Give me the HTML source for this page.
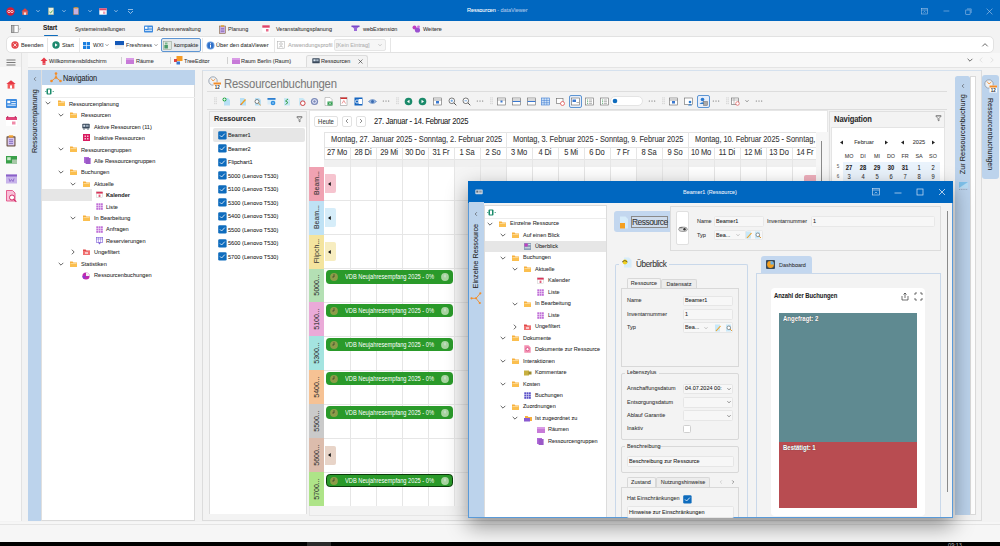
<!DOCTYPE html><html><head><meta charset="utf-8"><style>
html,body{margin:0;padding:0;}
body{width:1000px;height:546px;overflow:hidden;position:relative;background:#f3f3f3;font-family:"Liberation Sans",sans-serif;}
div{position:absolute;box-sizing:border-box;}
.t{white-space:nowrap;-webkit-text-stroke:0.06px currentColor;}
</style></head><body>
<div style="left:0px;top:0px;width:1000px;height:21px;background:#0067c0;"></div>
<svg style="position:absolute;left:6px;top:7px;" width="9" height="9" viewBox="0 0 9 9"><circle cx="4.5" cy="4.5" r="4.2" fill="#d0203a"/><ellipse cx="3" cy="4.5" rx="1.3" ry="1.1" fill="none" stroke="#fff" stroke-width="0.7"/><ellipse cx="6" cy="4.5" rx="1.3" ry="1.1" fill="none" stroke="#fff" stroke-width="0.7"/></svg>
<svg style="position:absolute;left:21px;top:7.5px;" width="8" height="7" viewBox="0 0 8 7"><path d="M0.3 3.5 L4 0.3 L7.7 3.5Z" fill="#e8413a"/><rect x="1.3" y="3.3" width="5.4" height="3.5" fill="#f06a5a"/><rect x="3.2" y="4.5" width="1.6" height="2.3" fill="#fff"/></svg>
<svg style="position:absolute;left:33.5px;top:7px;" width="8" height="8" viewBox="0 0 8 8"><path d="M2.4 3.2 L4 4.8 L5.6 3.2" fill="none" stroke="#cfe0f4" stroke-width="0.7"/></svg>
<svg style="position:absolute;left:59.5px;top:7px;" width="8" height="8" viewBox="0 0 8 8"><path d="M2.4 3.2 L4 4.8 L5.6 3.2" fill="none" stroke="#cfe0f4" stroke-width="0.7"/></svg>
<svg style="position:absolute;left:85.5px;top:7px;" width="8" height="8" viewBox="0 0 8 8"><path d="M2.4 3.2 L4 4.8 L5.6 3.2" fill="none" stroke="#cfe0f4" stroke-width="0.7"/></svg>
<svg style="position:absolute;left:111.5px;top:7px;" width="8" height="8" viewBox="0 0 8 8"><path d="M2.4 3.2 L4 4.8 L5.6 3.2" fill="none" stroke="#cfe0f4" stroke-width="0.7"/></svg>
<svg style="position:absolute;left:48px;top:7px;" width="6" height="8" viewBox="0 0 6 8"><rect x="0.3" y="0.8" width="5.4" height="7" fill="#e9f0e0" stroke="#8a9a7a" stroke-width="0.4"/><path d="M1.5 5 L2.6 6 L4.6 3.5" stroke="#2a9a3a" stroke-width="0.8" fill="none"/></svg>
<svg style="position:absolute;left:73px;top:7px;" width="6" height="8" viewBox="0 0 6 8"><rect x="0.3" y="0.8" width="5.4" height="7" fill="#c8b0e0" stroke="#8a6a30" stroke-width="0.4"/><rect x="1.3" y="0.3" width="3.4" height="1.3" fill="#e0a030"/></svg>
<svg style="position:absolute;left:99px;top:7.5px;" width="8" height="7" viewBox="0 0 8 7"><rect x="0.3" y="0.3" width="7.4" height="6.4" fill="#fff"/><rect x="0.3" y="0.3" width="7.4" height="2" fill="#e04468"/><rect x="4" y="3.5" width="2.4" height="2.4" fill="#f0a0b8"/></svg>
<svg style="position:absolute;left:127px;top:7.5px;" width="7" height="7" viewBox="0 0 7 7"><path d="M1 1.5 H6 M1 3 L3.5 5.5 L6 3" stroke="#cfe0f4" stroke-width="0.7" fill="none"/></svg>
<div class="t" style="left:467px;top:7.2px;font-size:5.6px;line-height:7px;color:#fff;letter-spacing:-0.1px">Ressourcen <span style="color:#a9c6ea">- dataViewer</span></div>
<svg style="position:absolute;left:920.5px;top:7.5px;" width="8" height="7" viewBox="0 0 8 7"><rect x="0.5" y="0.5" width="6" height="5.5" fill="none" stroke="#b9d1ee" stroke-width="0.5"/><path d="M0.5 2 H6.5" stroke="#b9d1ee" stroke-width="0.5"/><path d="M2.4 4.6 L3.5 3.4 L4.6 4.6" stroke="#b9d1ee" stroke-width="0.5" fill="none"/></svg>
<svg style="position:absolute;left:942.5px;top:10px;" width="7" height="2" viewBox="0 0 7 2"><path d="M0.5 1 H6.3" stroke="#b9d1ee" stroke-width="0.5"/></svg>
<svg style="position:absolute;left:964.5px;top:7.5px;" width="7" height="7" viewBox="0 0 7 7"><rect x="0.8" y="2" width="4.3" height="4.3" fill="none" stroke="#b9d1ee" stroke-width="0.5"/><path d="M2 0.9 H6.2 V5" stroke="#b9d1ee" stroke-width="0.5" fill="none"/></svg>
<svg style="position:absolute;left:986px;top:8px;" width="7" height="7" viewBox="0 0 7 7"><path d="M0.6 0.6 L6.4 6.4 M6.4 0.6 L0.6 6.4" stroke="#b9d1ee" stroke-width="0.55"/></svg>
<div style="left:0px;top:21px;width:1000px;height:16px;background:#f3f3f3;"></div>
<svg style="position:absolute;left:11px;top:25px;" width="10" height="8" viewBox="0 0 10 8"><rect x="0.4" y="0.4" width="6.8" height="7" fill="#fff" stroke="#777" stroke-width="0.6"/><rect x="0.4" y="0.4" width="2.6" height="7" fill="#bbb" stroke="#777" stroke-width="0.6"/><path d="M7.8 3.5 L8.7 4.4 L9.6 3.5" stroke="#777" stroke-width="0.5" fill="none"/></svg>
<div class="t" style="left:43px;top:24.47px;font-size:7.15px;line-height:8.22px;color:#222;transform:scaleX(0.91);transform-origin:left;font-weight:700;letter-spacing:-0.15px">Start</div>
<div style="left:43.5px;top:35px;width:14.5px;height:1.3px;background:#0f6cbd;border-radius:1px;"></div>
<div class="t" style="left:74.5px;top:25.71px;font-size:6.05px;line-height:6.96px;color:#333;transform:scaleX(0.91);transform-origin:left;letter-spacing:-0.05px">Systemeinstellungen</div>
<svg style="position:absolute;left:144px;top:25px;" width="9" height="8" viewBox="0 0 9 8"><rect x="0" y="0.5" width="9" height="7" rx="0.8" fill="#3d8be0"/><rect x="1" y="1.8" width="2.5" height="2" fill="#fff"/><rect x="4.5" y="2" width="3.5" height="0.7" fill="#fff"/><rect x="4.5" y="3.6" width="3.5" height="0.7" fill="#fff"/><rect x="1" y="5" width="7" height="0.7" fill="#fff"/></svg>
<div class="t" style="left:157px;top:25.71px;font-size:6.05px;line-height:6.96px;color:#333;transform:scaleX(0.91);transform-origin:left;">Adressverwaltung</div>
<svg style="position:absolute;left:219px;top:24.5px;" width="7" height="9" viewBox="0 0 7 9"><rect x="0.4" y="1" width="6.2" height="7.6" fill="#c9b0e6" stroke="#7a5a20" stroke-width="0.5"/><rect x="2" y="0.3" width="3" height="1.5" fill="#e0a030"/><path d="M1.8 3.5H5.2M1.8 5H5.2M1.8 6.5H5.2" stroke="#6a4aa0" stroke-width="0.5"/></svg>
<div class="t" style="left:228px;top:25.71px;font-size:6.05px;line-height:6.96px;color:#333;transform:scaleX(0.91);transform-origin:left;">Planung</div>
<svg style="position:absolute;left:262px;top:25px;" width="8" height="8" viewBox="0 0 8 8"><rect x="0.3" y="0.3" width="7.4" height="7.4" fill="#fff"/><rect x="0.3" y="0.3" width="7.4" height="2.4" fill="#e04468"/><rect x="4" y="4" width="2.5" height="2.5" fill="#e86a8a"/></svg>
<div class="t" style="left:276px;top:25.71px;font-size:6.05px;line-height:6.96px;color:#333;transform:scaleX(0.91);transform-origin:left;">Veranstaltungsplanung</div>
<svg style="position:absolute;left:351px;top:25px;" width="9" height="8" viewBox="0 0 9 8"><path d="M0.5 1 H8.5 L6 3.5 V6 H3 V3.5Z" fill="#9a6ad8"/><rect x="0.5" y="0.5" width="8" height="1.6" fill="#7a4ac8"/></svg>
<div class="t" style="left:362.5px;top:25.71px;font-size:6.05px;line-height:6.96px;color:#333;transform:scaleX(0.91);transform-origin:left;">webExtension</div>
<svg style="position:absolute;left:412px;top:25px;" width="9" height="8" viewBox="0 0 9 8"><circle cx="2.5" cy="2.5" r="2" fill="#c040c0"/><circle cx="5.5" cy="5" r="2.6" fill="#9a50d0"/><circle cx="6.5" cy="1.8" r="1.4" fill="#d070e0"/></svg>
<div class="t" style="left:423px;top:25.71px;font-size:6.05px;line-height:6.96px;color:#333;transform:scaleX(0.91);transform-origin:left;">Weitere</div>
<div style="left:6px;top:36.4px;width:988px;height:16.3px;background:#fff;border:1px solid #e2e2e2;border-radius:5px;"></div>
<svg style="position:absolute;left:10.5px;top:41px;" width="8" height="8" viewBox="0 0 8 8"><circle cx="4" cy="4" r="3.7" fill="#e5484d"/><path d="M2.4 2.4 L5.6 5.6 M5.6 2.4 L2.4 5.6" stroke="#fff" stroke-width="0.8"/></svg>
<div class="t" style="left:21px;top:41.44px;font-size:6.16px;line-height:7.08px;color:#333;transform:scaleX(0.91);transform-origin:left;">Beenden</div>
<div style="left:47px;top:38px;width:1px;height:14px;background:#e6e6e6;"></div>
<svg style="position:absolute;left:51.5px;top:41px;" width="8" height="8" viewBox="0 0 8 8"><circle cx="4" cy="4" r="3.7" fill="#1f8a70"/><path d="M3 2.3 L5.6 4 L3 5.7Z" fill="#fff"/></svg>
<div class="t" style="left:62px;top:41.44px;font-size:6.16px;line-height:7.08px;color:#333;transform:scaleX(0.91);transform-origin:left;">Start</div>
<div style="left:79px;top:38px;width:1px;height:14px;background:#e6e6e6;"></div>
<svg style="position:absolute;left:83px;top:41.5px;" width="7" height="7" viewBox="0 0 7 7"><rect x="0" y="0" width="3.2" height="3.2" fill="#1a7fe0"/><rect x="3.8" y="0" width="3.2" height="3.2" fill="#1a7fe0"/><rect x="0" y="3.8" width="3.2" height="3.2" fill="#1a7fe0"/><rect x="3.8" y="3.8" width="3.2" height="3.2" fill="#1a7fe0"/></svg>
<div class="t" style="left:93px;top:41.44px;font-size:6.16px;line-height:7.08px;color:#333;transform:scaleX(0.91);transform-origin:left;">WXI</div>
<svg style="position:absolute;left:103px;top:41.3px;" width="8" height="8" viewBox="0 0 8 8"><path d="M2.5 3.25 L4 4.75 L5.5 3.25" fill="none" stroke="#555" stroke-width="0.6"/></svg>
<svg style="position:absolute;left:115px;top:40.5px;" width="9" height="8" viewBox="0 0 9 8"><rect x="0" y="0" width="9" height="4" fill="#1559b8"/><rect x="0" y="4" width="9" height="1" fill="#dfe6f0"/><rect x="0" y="5" width="9" height="3" fill="#f0f0f0"/></svg>
<div class="t" style="left:126px;top:41.44px;font-size:6.16px;line-height:7.08px;color:#333;transform:scaleX(0.91);transform-origin:left;">Freshness</div>
<svg style="position:absolute;left:151.5px;top:41.3px;" width="8" height="8" viewBox="0 0 8 8"><path d="M2.5 3.25 L4 4.75 L5.5 3.25" fill="none" stroke="#555" stroke-width="0.6"/></svg>
<div style="left:161px;top:38px;width:39.5px;height:13.5px;background:#e6eaef;border:0.8px solid #5d95d3;border-radius:2px;"></div>
<svg style="position:absolute;left:163px;top:40.5px;" width="9" height="9" viewBox="0 0 9 9"><rect x="0.4" y="0.4" width="8" height="8" fill="#dfe8e0" stroke="#8a9a8a" stroke-width="0.5"/><rect x="1.4" y="4" width="3.5" height="3.5" fill="#4a9a6a"/><rect x="2" y="1.5" width="2.5" height="2" fill="#7ab890"/></svg>
<div class="t" style="left:174px;top:41.44px;font-size:6.16px;line-height:7.08px;color:#333;transform:scaleX(0.91);transform-origin:left;">kompakte</div>
<div style="left:202px;top:38px;width:1px;height:14px;background:#e6e6e6;"></div>
<svg style="position:absolute;left:206px;top:40.5px;" width="9" height="9" viewBox="0 0 9 9"><circle cx="4.5" cy="4.5" r="4" fill="#6a9ee0"/><circle cx="4.5" cy="4.5" r="3" fill="#2f6fc8"/><rect x="4" y="3.8" width="1" height="2.8" fill="#fff"/><rect x="4" y="2.3" width="1" height="0.9" fill="#fff"/></svg>
<div class="t" style="left:216px;top:41.44px;font-size:6.16px;line-height:7.08px;color:#333;transform:scaleX(0.91);transform-origin:left;">Über den dataViewer</div>
<div style="left:273.5px;top:38px;width:1px;height:14px;background:#e6e6e6;"></div>
<svg style="position:absolute;left:277px;top:41px;" width="8" height="8" viewBox="0 0 8 8"><rect x="0.4" y="0.4" width="7" height="7" fill="#fff" stroke="#aaa" stroke-width="0.5"/><circle cx="4" cy="3" r="1.3" fill="none" stroke="#999" stroke-width="0.5"/><path d="M1.8 6.3 Q4 4 6.2 6.3" fill="none" stroke="#999" stroke-width="0.5"/></svg>
<div class="t" style="left:287.5px;top:41.44px;font-size:6.16px;line-height:7.08px;color:#aaa;transform:scaleX(0.91);transform-origin:left;">Anwendungsprofil</div>
<div style="left:334px;top:38.5px;width:52px;height:12.5px;background:#f6f6f6;border:0.6px solid #e6e6e6;border-radius:2px;"></div>
<div class="t" style="left:336px;top:41.44px;font-size:6.16px;line-height:7.08px;color:#b0b0b0;transform:scaleX(0.91);transform-origin:left;">[Kein Eintrag]</div>
<svg style="position:absolute;left:375.5px;top:41.3px;" width="8" height="8" viewBox="0 0 8 8"><path d="M2.4 3.2 L4 4.8 L5.6 3.2" fill="none" stroke="#aaa" stroke-width="0.6"/></svg>
<div style="left:389.5px;top:38px;width:1px;height:14px;background:#e6e6e6;"></div>
<svg style="position:absolute;left:981.3px;top:40.5px;" width="8" height="8" viewBox="0 0 8 8"><path d="M1.2999999999999998 5.35 L4 2.65 L6.7 5.35" fill="none" stroke="#444" stroke-width="0.8"/></svg>
<div style="left:0px;top:53px;width:1000px;height:14px;background:#f3f3f3;"></div>
<div style="left:0px;top:67px;width:21px;height:454px;background:#f9f9f9;"></div>
<div style="left:28px;top:53px;width:972px;height:14px;background:#f8f8f8;"></div>
<div style="left:28px;top:66.5px;width:972px;height:0.8px;background:#e4e4e4;"></div>
<svg style="position:absolute;left:5.5px;top:59px;" width="10" height="7" viewBox="0 0 10 7"><path d="M0.5 1 H9.5 M0.5 3.5 H9.5 M0.5 6 H9.5" stroke="#444" stroke-width="0.7"/></svg>
<svg style="position:absolute;left:39.5px;top:57px;" width="8" height="8" viewBox="0 0 8 8"><path d="M4 0.5 L7.5 4 H5.5 V6.5 H2.5 V4 H0.5Z" fill="#e63946"/><rect x="2.5" y="6.6" width="3" height="1.2" fill="#e63946"/></svg>
<div class="t" style="left:49px;top:57.61px;font-size:6.05px;line-height:6.96px;color:#333;transform:scaleX(0.91);transform-origin:left;">Willkommensbildschirm</div>
<div style="left:121px;top:57px;width:0.8px;height:7px;background:#d0d0d0;"></div>
<svg style="position:absolute;left:126px;top:57.5px;" width="8" height="6" viewBox="0 0 8 6"><rect x="0" y="0" width="8" height="6" fill="#c77ad8"/><rect x="0" y="0" width="8" height="2" fill="#d99be6"/></svg>
<div class="t" style="left:135.5px;top:57.61px;font-size:6.05px;line-height:6.96px;color:#333;transform:scaleX(0.91);transform-origin:left;">Räume</div>
<div style="left:170px;top:57px;width:0.8px;height:7px;background:#d0d0d0;"></div>
<svg style="position:absolute;left:174px;top:55.5px;" width="9" height="9" viewBox="0 0 9 9"><rect x="2.5" y="0" width="6" height="5" fill="#f59a23"/><rect x="0" y="3" width="3" height="3" fill="#e04040"/><rect x="2.5" y="5.5" width="3.5" height="3" fill="#3a78d0"/></svg>
<div class="t" style="left:184px;top:57.61px;font-size:6.05px;line-height:6.96px;color:#333;transform:scaleX(0.91);transform-origin:left;">TreeEditor</div>
<div style="left:227px;top:57px;width:0.8px;height:7px;background:#d0d0d0;"></div>
<svg style="position:absolute;left:231.5px;top:57.5px;" width="8" height="6" viewBox="0 0 8 6"><rect x="0" y="0" width="8" height="6" fill="#c77ad8"/><rect x="0" y="0" width="8" height="2" fill="#d99be6"/></svg>
<div class="t" style="left:240.7px;top:57.61px;font-size:6.05px;line-height:6.96px;color:#333;transform:scaleX(0.91);transform-origin:left;">Raum Berlin (Raum)</div>
<div style="left:306px;top:55px;width:62px;height:12.3px;background:#f3f3f3;border:0.7px solid #dcdcdc;border-bottom:none;border-radius:2.5px 2.5px 0 0;"></div>
<svg style="position:absolute;left:311.5px;top:57.5px;" width="8" height="6" viewBox="0 0 8 6"><rect x="0.3" y="0.3" width="7.4" height="5" rx="0.6" fill="#3b4a5c"/><rect x="1.4" y="1.3" width="2.2" height="2" fill="#d8e4f0"/><rect x="4.2" y="1.3" width="2.4" height="2" fill="#a8b8c8"/></svg>
<div class="t" style="left:321px;top:57.61px;font-size:6.05px;line-height:6.96px;color:#333;transform:scaleX(0.91);transform-origin:left;">Ressourcen</div>
<svg style="position:absolute;left:357px;top:57.5px;" width="7" height="7" viewBox="0 0 7 7"><path d="M1.5 1.5 L5.5 5.5 M5.5 1.5 L1.5 5.5" stroke="#333" stroke-width="0.6"/></svg>
<svg style="position:absolute;left:965.5px;top:55.8px;" width="8" height="8" viewBox="0 0 8 8"><path d="M1.6 2.8 L4 5.2 L6.4 2.8" fill="none" stroke="#444" stroke-width="0.8"/></svg>
<svg style="position:absolute;left:977px;top:55.8px;" width="8" height="8" viewBox="0 0 8 8"><path d="M5.2 1.6 L2.8 4 L5.2 6.4" fill="none" stroke="#d0d0d0" stroke-width="0.6"/></svg>
<svg style="position:absolute;left:988px;top:55.8px;" width="8" height="8" viewBox="0 0 8 8"><path d="M2.8 1.6 L5.2 4 L2.8 6.4" fill="none" stroke="#d0d0d0" stroke-width="0.6"/></svg>
<div style="left:21px;top:53px;width:0.8px;height:468px;background:#e2e2e2;"></div>
<svg style="position:absolute;left:6px;top:79.5px;" width="10" height="9" viewBox="0 0 10 9"><path d="M5 0.3 L9.7 4 H0.3Z" fill="#e63946"/><rect x="1.6" y="4" width="6.8" height="4.6" fill="#f25c5c"/><rect x="4" y="5.4" width="2" height="3.2" fill="#fff"/></svg>
<svg style="position:absolute;left:5.5px;top:98.5px;" width="11" height="9" viewBox="0 0 11 9"><rect x="0" y="0" width="11" height="9" rx="1" fill="#3d8be0"/><rect x="1.3" y="1.8" width="3" height="2.4" fill="#fff"/><rect x="5.3" y="2" width="4.5" height="0.8" fill="#fff"/><rect x="5.3" y="4" width="4.5" height="0.8" fill="#fff"/><rect x="1.3" y="5.7" width="8.5" height="0.9" fill="#fff"/></svg>
<svg style="position:absolute;left:5.5px;top:116px;" width="11" height="10" viewBox="0 0 11 10"><rect x="0" y="1" width="11" height="9" fill="#fff"/><rect x="0" y="1" width="11" height="3" fill="#e0457a"/><rect x="1.2" y="0" width="1" height="2" fill="#b03060"/><rect x="8.8" y="0" width="1" height="2" fill="#b03060"/><rect x="6" y="5.5" width="3.5" height="3" fill="#f08aa8"/></svg>
<svg style="position:absolute;left:6px;top:135px;" width="10" height="12" viewBox="0 0 10 12"><rect x="0.5" y="1.3" width="9" height="10.2" rx="0.8" fill="#6b5040"/><rect x="1.6" y="2.6" width="6.8" height="7.8" fill="#d8c8f0"/><rect x="2.8" y="0.3" width="4.4" height="2.2" fill="#f0a030"/><path d="M3 4.8H7M3 6.6H7M3 8.4H7" stroke="#6a50b0" stroke-width="0.7"/></svg>
<svg style="position:absolute;left:5.5px;top:155.5px;" width="11" height="8" viewBox="0 0 11 8"><rect x="0" y="0" width="11" height="7.5" fill="#3aa04a"/><rect x="1.2" y="1.2" width="3.5" height="3" fill="#c8e8c8"/><rect x="6" y="3.5" width="5" height="4" fill="#a8c8a8"/></svg>
<svg style="position:absolute;left:5.5px;top:174px;" width="11" height="10" viewBox="0 0 11 10"><rect x="0" y="0.5" width="11" height="9" fill="#c8b4ea"/><rect x="0" y="0.5" width="11" height="2" fill="#8a60c8"/><path d="M3 4.5 L4 7.5 L5.5 5.5 L7 7.5 L8 4.5" stroke="#7a50c0" stroke-width="0.7" fill="none"/></svg>
<svg style="position:absolute;left:5.5px;top:190px;" width="11" height="13" viewBox="0 0 11 13"><path d="M0.5 0.5 H6.5 L9 3 V11 H0.5Z" fill="#f8c0d8" stroke="#e0407a" stroke-width="0.8"/><circle cx="6" cy="7.5" r="2.5" fill="#fff" stroke="#d02060" stroke-width="0.9"/><path d="M7.8 9.3 L10.3 11.8" stroke="#d02060" stroke-width="1.1"/></svg>
<div style="left:28px;top:70px;width:12.8px;height:451px;background:#bcd3ec;"></div>
<div style="left:40.8px;top:70px;width:2px;height:451px;background:linear-gradient(90deg,#d8d8d8,#f4f4f4);"></div>
<svg style="position:absolute;left:31px;top:75px;" width="8" height="8" viewBox="0 0 8 8"><path d="M4.9 2.2 L3.1 4 L4.9 5.8" fill="none" stroke="#555" stroke-width="0.6"/></svg>
<div class="t" style="left:-114.8px;top:116.56px;width:300px;text-align:center;font-size:7.2px;line-height:8.28px;color:#222;transform:rotate(-90deg);">Ressourcenplanung</div>
<div style="left:42px;top:70px;width:153px;height:451px;background:#fff;border-right:0.8px solid #dadada;border-bottom:0.8px solid #dadada;"></div>
<div style="left:42px;top:70px;width:153px;height:15px;background:#bcd3ec;"></div>
<svg style="position:absolute;left:50px;top:72px;" width="12" height="11" viewBox="0 0 12 11"><path d="M6 1.5 V5.5 L1.5 9 M6 5.5 L10.5 9" stroke="#f28c28" stroke-width="0.9" fill="none"/><circle cx="6" cy="1.5" r="1.3" fill="#f28c28"/><circle cx="6" cy="5.5" r="1.3" fill="#f28c28"/><circle cx="1.5" cy="9" r="1.3" fill="#f28c28"/><circle cx="10.5" cy="9" r="1.3" fill="#f28c28"/></svg>
<div class="t" style="left:63.3px;top:73.50px;font-size:8.14px;line-height:9.36px;color:#222;transform:scaleX(0.91);transform-origin:left;letter-spacing:-0.1px">Navigation</div>
<svg style="position:absolute;left:45px;top:88px;" width="9" height="7" viewBox="0 0 9 7"><rect x="1.5" y="0.5" width="5" height="6" rx="1" fill="#1a8a6a"/><rect x="3" y="1.5" width="2" height="4" fill="#fff"/><circle cx="0.8" cy="3.5" r="0.6" fill="#1a8a6a"/><circle cx="8.2" cy="3.5" r="0.6" fill="#1a8a6a"/></svg>
<div style="left:42px;top:96.5px;width:153px;height:0.7px;background:#ececec;"></div>
<div style="left:42px;top:189px;width:50px;height:11.6px;background:#e6e6e6;"></div>
<svg style="position:absolute;left:44.2px;top:99.2px;" width="8" height="8" viewBox="0 0 8 8"><path d="M1.7000000000000002 2.85 L4 5.15 L6.3 2.85" fill="none" stroke="#333" stroke-width="0.75"/></svg>
<svg style="position:absolute;left:57.8px;top:100.2px;" width="7" height="6" viewBox="0 0 7 6"><path d="M0 0.5 h2.6 l0.8 0.9 H7 V6 H0Z" fill="#f7b03c"/><rect x="0" y="2" width="7" height="4" fill="#fbbf4f"/><rect x="0.6" y="2.4" width="5.8" height="0.6" fill="#fff3d6" opacity="0.8"/></svg>
<div class="t" style="left:68.8px;top:99.64px;font-size:6.16px;line-height:7.08px;color:#2a2a2a;transform:scaleX(0.91);transform-origin:left;">Ressourcenplanung</div>
<svg style="position:absolute;left:57px;top:110.7px;" width="8" height="8" viewBox="0 0 8 8"><path d="M1.7000000000000002 2.85 L4 5.15 L6.3 2.85" fill="none" stroke="#333" stroke-width="0.75"/></svg>
<svg style="position:absolute;left:70px;top:111.7px;" width="7" height="6" viewBox="0 0 7 6"><path d="M0 0.5 h2.6 l0.8 0.9 H7 V6 H0Z" fill="#f7b03c"/><rect x="0" y="2" width="7" height="4" fill="#fbbf4f"/><rect x="0.6" y="2.4" width="5.8" height="0.6" fill="#fff3d6" opacity="0.8"/></svg>
<div class="t" style="left:81px;top:111.14px;font-size:6.16px;line-height:7.08px;color:#2a2a2a;transform:scaleX(0.91);transform-origin:left;">Ressourcen</div>
<svg style="position:absolute;left:82px;top:122.8px;" width="8" height="7" viewBox="0 0 8 7"><rect x="0.3" y="0.8" width="7.4" height="4.8" rx="0.8" fill="#3b4a5c"/><rect x="1.3" y="1.8" width="2" height="2" fill="#d0dce8"/><rect x="4" y="1.8" width="2.6" height="2" fill="#98a8b8"/><rect x="1.5" y="5.6" width="1" height="1.2" fill="#3b4a5c"/><rect x="5.5" y="5.6" width="1" height="1.2" fill="#3b4a5c"/></svg>
<div class="t" style="left:94px;top:122.74px;font-size:6.16px;line-height:7.08px;color:#2a2a2a;transform:scaleX(0.91);transform-origin:left;">Aktive Ressourcen (11)</div>
<svg style="position:absolute;left:83px;top:134.1px;" width="7" height="7" viewBox="0 0 7 7"><rect x="0" y="0" width="7" height="7" fill="#d81b60"/><rect x="1.5" y="1.5" width="1.5" height="1.5" fill="#f8bbd0"/><rect x="4" y="1.5" width="1.5" height="1.5" fill="#f8bbd0"/><rect x="1.5" y="4" width="1.5" height="1.5" fill="#f8bbd0"/><rect x="4" y="4" width="1.5" height="1.5" fill="#f8bbd0"/></svg>
<div class="t" style="left:94px;top:134.04px;font-size:6.16px;line-height:7.08px;color:#2a2a2a;transform:scaleX(0.91);transform-origin:left;">Inaktive Ressourcen</div>
<svg style="position:absolute;left:57px;top:145.3px;" width="8" height="8" viewBox="0 0 8 8"><path d="M1.7000000000000002 2.85 L4 5.15 L6.3 2.85" fill="none" stroke="#333" stroke-width="0.75"/></svg>
<svg style="position:absolute;left:70px;top:146.3px;" width="7" height="6" viewBox="0 0 7 6"><path d="M0 0.5 h2.6 l0.8 0.9 H7 V6 H0Z" fill="#f7b03c"/><rect x="0" y="2" width="7" height="4" fill="#fbbf4f"/><rect x="0.6" y="2.4" width="5.8" height="0.6" fill="#fff3d6" opacity="0.8"/></svg>
<div class="t" style="left:81px;top:145.74px;font-size:6.16px;line-height:7.08px;color:#2a2a2a;transform:scaleX(0.91);transform-origin:left;">Ressourcengruppen</div>
<svg style="position:absolute;left:83.5px;top:157.1px;" width="7" height="7" viewBox="0 0 7 7"><rect x="0" y="0" width="5" height="6" fill="#b06ad8"/><rect x="1.6" y="1" width="5" height="6" fill="#9b59c8"/></svg>
<div class="t" style="left:94px;top:157.04px;font-size:6.16px;line-height:7.08px;color:#2a2a2a;transform:scaleX(0.91);transform-origin:left;">Alle Ressourcengruppen</div>
<svg style="position:absolute;left:57px;top:168px;" width="8" height="8" viewBox="0 0 8 8"><path d="M1.7000000000000002 2.85 L4 5.15 L6.3 2.85" fill="none" stroke="#333" stroke-width="0.75"/></svg>
<svg style="position:absolute;left:70px;top:169.0px;" width="7" height="6" viewBox="0 0 7 6"><path d="M0 0.5 h2.6 l0.8 0.9 H7 V6 H0Z" fill="#f7b03c"/><rect x="0" y="2" width="7" height="4" fill="#fbbf4f"/><rect x="0.6" y="2.4" width="5.8" height="0.6" fill="#fff3d6" opacity="0.8"/></svg>
<div class="t" style="left:81px;top:168.44px;font-size:6.16px;line-height:7.08px;color:#2a2a2a;transform:scaleX(0.91);transform-origin:left;">Buchungen</div>
<svg style="position:absolute;left:69px;top:179.5px;" width="8" height="8" viewBox="0 0 8 8"><path d="M1.7000000000000002 2.85 L4 5.15 L6.3 2.85" fill="none" stroke="#333" stroke-width="0.75"/></svg>
<svg style="position:absolute;left:82.5px;top:180.5px;" width="7" height="6" viewBox="0 0 7 6"><path d="M0 0.5 h2.6 l0.8 0.9 H7 V6 H0Z" fill="#f7b03c"/><rect x="0" y="2" width="7" height="4" fill="#fbbf4f"/><rect x="0.6" y="2.4" width="5.8" height="0.6" fill="#fff3d6" opacity="0.8"/></svg>
<div class="t" style="left:94px;top:179.94px;font-size:6.16px;line-height:7.08px;color:#2a2a2a;transform:scaleX(0.91);transform-origin:left;">Aktuelle</div>
<svg style="position:absolute;left:95.5px;top:191.3px;" width="7" height="7" viewBox="0 0 7 7"><rect x="0.3" y="0.8" width="6.4" height="5.9" fill="#fff" stroke="#bbb" stroke-width="0.4"/><rect x="0.3" y="0.8" width="6.4" height="1.8" fill="#d9355a"/><rect x="2.6" y="3.6" width="1.8" height="2.4" fill="#d9355a" opacity="0.8"/></svg>
<div class="t" style="left:106px;top:191.24px;font-size:6.16px;line-height:7.08px;color:#2a2a2a;transform:scaleX(0.91);transform-origin:left;"><b>Kalender</b></div>
<svg style="position:absolute;left:95.5px;top:202.9px;" width="7" height="7" viewBox="0 0 7 7"><rect x="0.3" y="0.3" width="1.9" height="1.9" fill="#c070d8"/><rect x="0.3" y="2.5999999999999996" width="1.9" height="1.9" fill="#c070d8"/><rect x="0.3" y="4.8999999999999995" width="1.9" height="1.9" fill="#c070d8"/><rect x="2.5999999999999996" y="0.3" width="1.9" height="1.9" fill="#c070d8"/><rect x="2.5999999999999996" y="2.5999999999999996" width="1.9" height="1.9" fill="#c070d8"/><rect x="2.5999999999999996" y="4.8999999999999995" width="1.9" height="1.9" fill="#c070d8"/><rect x="4.8999999999999995" y="0.3" width="1.9" height="1.9" fill="#c070d8"/><rect x="4.8999999999999995" y="2.5999999999999996" width="1.9" height="1.9" fill="#c070d8"/><rect x="4.8999999999999995" y="4.8999999999999995" width="1.9" height="1.9" fill="#c070d8"/></svg>
<div class="t" style="left:106px;top:202.84px;font-size:6.16px;line-height:7.08px;color:#2a2a2a;transform:scaleX(0.91);transform-origin:left;">Liste</div>
<svg style="position:absolute;left:69px;top:213.6px;" width="8" height="8" viewBox="0 0 8 8"><path d="M1.7000000000000002 2.85 L4 5.15 L6.3 2.85" fill="none" stroke="#333" stroke-width="0.75"/></svg>
<svg style="position:absolute;left:82.5px;top:214.6px;" width="7" height="6" viewBox="0 0 7 6"><path d="M0 0.5 h2.6 l0.8 0.9 H7 V6 H0Z" fill="#f7b03c"/><rect x="0" y="2" width="7" height="4" fill="#fbbf4f"/><rect x="0.6" y="2.4" width="5.8" height="0.6" fill="#fff3d6" opacity="0.8"/></svg>
<div class="t" style="left:94px;top:214.04px;font-size:6.16px;line-height:7.08px;color:#2a2a2a;transform:scaleX(0.91);transform-origin:left;">In Bearbeitung</div>
<svg style="position:absolute;left:95.5px;top:225.5px;" width="7" height="7" viewBox="0 0 7 7"><rect x="0.3" y="0.3" width="1.9" height="1.9" fill="#c070d8"/><rect x="0.3" y="2.5999999999999996" width="1.9" height="1.9" fill="#c070d8"/><rect x="0.3" y="4.8999999999999995" width="1.9" height="1.9" fill="#c070d8"/><rect x="2.5999999999999996" y="0.3" width="1.9" height="1.9" fill="#c070d8"/><rect x="2.5999999999999996" y="2.5999999999999996" width="1.9" height="1.9" fill="#c070d8"/><rect x="2.5999999999999996" y="4.8999999999999995" width="1.9" height="1.9" fill="#c070d8"/><rect x="4.8999999999999995" y="0.3" width="1.9" height="1.9" fill="#c070d8"/><rect x="4.8999999999999995" y="2.5999999999999996" width="1.9" height="1.9" fill="#c070d8"/><rect x="4.8999999999999995" y="4.8999999999999995" width="1.9" height="1.9" fill="#c070d8"/></svg>
<div class="t" style="left:106px;top:225.44px;font-size:6.16px;line-height:7.08px;color:#2a2a2a;transform:scaleX(0.91);transform-origin:left;">Anfragen</div>
<svg style="position:absolute;left:95.5px;top:237.0px;" width="7" height="8" viewBox="0 0 7 8"><rect x="0.3" y="0.3" width="6.4" height="5" fill="#fff" stroke="#7a5ad8" stroke-width="0.6"/><path d="M0.3 2 H6.7 M2.4 0.3 V5.3 M4.6 0.3 V5.3" stroke="#7a5ad8" stroke-width="0.5"/><path d="M2 5.5 L3.5 7.5 L5 5.5Z" fill="#7a5ad8"/></svg>
<div class="t" style="left:106px;top:236.94px;font-size:6.16px;line-height:7.08px;color:#2a2a2a;transform:scaleX(0.91);transform-origin:left;">Reservierungen</div>
<svg style="position:absolute;left:69px;top:248px;" width="8" height="8" viewBox="0 0 8 8"><path d="M2.85 1.7000000000000002 L5.15 4 L2.85 6.3" fill="none" stroke="#333" stroke-width="0.75"/></svg>
<svg style="position:absolute;left:82.5px;top:249px;" width="7" height="6" viewBox="0 0 7 6"><path d="M0 0.5 h2.6 l0.8 0.9 H7 V6 H0Z" fill="#e04848"/><rect x="0" y="2" width="7" height="4" fill="#f07070"/><rect x="2" y="3" width="3" height="2" fill="#fff" opacity="0.6"/></svg>
<div class="t" style="left:94px;top:248.44px;font-size:6.16px;line-height:7.08px;color:#2a2a2a;transform:scaleX(0.91);transform-origin:left;">Ungefiltert</div>
<svg style="position:absolute;left:57px;top:259.5px;" width="8" height="8" viewBox="0 0 8 8"><path d="M1.7000000000000002 2.85 L4 5.15 L6.3 2.85" fill="none" stroke="#333" stroke-width="0.75"/></svg>
<svg style="position:absolute;left:70px;top:260.5px;" width="7" height="6" viewBox="0 0 7 6"><path d="M0 0.5 h2.6 l0.8 0.9 H7 V6 H0Z" fill="#f7b03c"/><rect x="0" y="2" width="7" height="4" fill="#fbbf4f"/><rect x="0.6" y="2.4" width="5.8" height="0.6" fill="#fff3d6" opacity="0.8"/></svg>
<div class="t" style="left:81px;top:259.94px;font-size:6.16px;line-height:7.08px;color:#2a2a2a;transform:scaleX(0.91);transform-origin:left;">Statistiken</div>
<svg style="position:absolute;left:82px;top:271.5px;" width="8" height="8" viewBox="0 0 8 8"><circle cx="4" cy="4" r="3.6" fill="#c02ab0"/><path d="M4 4 V0.4 A3.6 3.6 0 0 1 7.6 4Z" fill="#f0f0f0"/><path d="M4 4 H0.4 A3.6 3.6 0 0 0 2 7" fill="#8a3ad0"/></svg>
<div class="t" style="left:94px;top:271.44px;font-size:6.16px;line-height:7.08px;color:#2a2a2a;transform:scaleX(0.91);transform-origin:left;">Ressourcenbuchungen</div>
<div style="left:202px;top:69.5px;width:780px;height:451.5px;background:#f3f3f3;border:0.8px solid #dcdcdc;border-top:1px solid #d5e1ee;"></div>
<svg style="position:absolute;left:208px;top:75.6px;" width="13" height="14" viewBox="0 0 13 14"><circle cx="5" cy="5" r="4.2" fill="#eef2f6" stroke="#8a96a4" stroke-width="0.8"/><path d="M5 5 L3 2.5 M5 5 L7.3 3" stroke="#f28c28" stroke-width="0.8"/><rect x="5.5" y="6.5" width="7.5" height="7" fill="#fff"/><rect x="5.5" y="6.5" width="7.5" height="2" fill="#f28c28"/><text x="9.2" y="13.2" font-size="4.5" text-anchor="middle" font-family="Liberation Sans" fill="#333" font-weight="700">12</text></svg>
<div class="t" style="left:223.5px;top:76.52px;font-size:12.43px;line-height:14.29px;color:#7b7b7b;transform:scaleX(0.91);transform-origin:left;letter-spacing:-0.2px">Ressourcenbuchungen</div>
<div style="left:207px;top:91px;width:740px;height:0.8px;background:#dddddd;"></div>
<svg style="position:absolute;left:214.0px;top:97px;" width="3" height="8" viewBox="0 0 3 8"><rect x="0.3" y="0.5" width="0.9" height="0.9" fill="#c4c4c4"/><rect x="0.3" y="2.4" width="0.9" height="0.9" fill="#c4c4c4"/><rect x="0.3" y="4.3" width="0.9" height="0.9" fill="#c4c4c4"/><rect x="0.3" y="6.2" width="0.9" height="0.9" fill="#c4c4c4"/><rect x="1.8" y="0.5" width="0.9" height="0.9" fill="#c4c4c4"/><rect x="1.8" y="2.4" width="0.9" height="0.9" fill="#c4c4c4"/><rect x="1.8" y="4.3" width="0.9" height="0.9" fill="#c4c4c4"/><rect x="1.8" y="6.2" width="0.9" height="0.9" fill="#c4c4c4"/></svg>
<svg style="position:absolute;left:221.5px;top:96.5px;" width="9" height="9" viewBox="0 0 9 9"><path d="M2 1 H6 L8 3 V8.5 H2Z" fill="#b8e0f5"/><circle cx="2.5" cy="2.5" r="2" fill="#2aa84a"/><path d="M2.5 1.2 V3.8 M1.2 2.5 H3.8" stroke="#fff" stroke-width="0.7"/></svg>
<svg style="position:absolute;left:237.5px;top:96.5px;" width="9" height="9" viewBox="0 0 9 9"><path d="M2 1 H6 L8 3 V8.5 H2Z" fill="#b8e0f5"/><path d="M3 7.5 L7.5 2.5" stroke="#f0a020" stroke-width="1.3"/><path d="M2.6 8 L3.2 6.8" stroke="#d04040" stroke-width="0.8"/></svg>
<svg style="position:absolute;left:252.5px;top:96.5px;" width="9" height="9" viewBox="0 0 9 9"><path d="M2 1 H6 L8 3 V8.5 H2Z" fill="#b8e0f5"/><circle cx="4" cy="4.5" r="2" fill="#fff" stroke="#555" stroke-width="0.7"/><path d="M5.4 6 L7.6 8.2" stroke="#e09020" stroke-width="1"/></svg>
<svg style="position:absolute;left:267.0px;top:96.5px;" width="9" height="9" viewBox="0 0 9 9"><rect x="0.5" y="1" width="8" height="6.5" fill="#d8ecf8"/><rect x="0.5" y="1" width="8" height="1.8" fill="#2f7fd0"/><circle cx="6" cy="6" r="2.3" fill="#2f8fe0"/><path d="M5 6 H7" stroke="#fff" stroke-width="0.6"/></svg>
<svg style="position:absolute;left:281.5px;top:96.5px;" width="9" height="9" viewBox="0 0 9 9"><path d="M2 1 H6 L8 3 V8.5 H2Z" fill="#c8e8f5"/><path d="M3.5 7.5 L6 5.5 L3.5 4 L6 2" stroke="#2a9a3a" stroke-width="0.9" fill="none"/></svg>
<svg style="position:absolute;left:296.5px;top:96.5px;" width="9" height="9" viewBox="0 0 9 9"><path d="M2 1 H6 L8 3 V8.5 H2Z" fill="#c8e8f5"/><circle cx="5.8" cy="6.2" r="2.3" fill="#fff" stroke="#d03030" stroke-width="0.9"/></svg>
<svg style="position:absolute;left:310.0px;top:96.5px;" width="9" height="9" viewBox="0 0 9 9"><circle cx="4.5" cy="4.5" r="3.6" fill="#7a8ab8"/><circle cx="4.5" cy="4.5" r="2.3" fill="#eef"/><circle cx="4.5" cy="4.5" r="1.2" fill="#7a8ab8"/></svg>
<svg style="position:absolute;left:324.0px;top:96.5px;" width="9" height="9" viewBox="0 0 9 9"><path d="M1 0.5 H6 L8 2.5 V8.5 H1Z" fill="#fff" stroke="#999" stroke-width="0.5"/><rect x="3.5" y="4.5" width="5" height="4" fill="#2a9a4a"/><path d="M4.5 5.2 L7.5 7.8 M7.5 5.2 L4.5 7.8" stroke="#fff" stroke-width="0.6"/></svg>
<svg style="position:absolute;left:338.5px;top:96.5px;" width="9" height="9" viewBox="0 0 9 9"><rect x="1.5" y="0.5" width="6.5" height="8" fill="#fff" stroke="#888" stroke-width="0.5"/><rect x="1.5" y="0.5" width="6.5" height="1.5" fill="#d03030"/><path d="M3 6.5 L4.8 3.5 L6.5 6.5" stroke="#e05050" stroke-width="0.6" fill="none"/></svg>
<svg style="position:absolute;left:353.5px;top:96.5px;" width="9" height="9" viewBox="0 0 9 9"><rect x="0.5" y="0.5" width="8" height="8" fill="#1565c0"/><rect x="4.5" y="2" width="3.5" height="5" fill="#fff"/><circle cx="3" cy="4.5" r="1.6" fill="none" stroke="#fff" stroke-width="0.8"/></svg>
<svg style="position:absolute;left:368.0px;top:96.5px;" width="9" height="9" viewBox="0 0 9 9"><path d="M0.5 4.5 Q4.5 0.5 8.5 4.5 Q4.5 8.5 0.5 4.5Z" fill="#9ab8e0" stroke="#3a6ab0" stroke-width="0.5"/><circle cx="4.5" cy="4.5" r="1.5" fill="#3a6ab0"/></svg>
<svg style="position:absolute;left:382px;top:100px;" width="8" height="2" viewBox="0 0 8 2"><circle cx="1.3" cy="1" r="0.55" fill="#555"/><circle cx="4" cy="1" r="0.55" fill="#555"/><circle cx="6.7" cy="1" r="0.55" fill="#555"/></svg>
<svg style="position:absolute;left:395.5px;top:97px;" width="3" height="8" viewBox="0 0 3 8"><rect x="0.3" y="0.5" width="0.9" height="0.9" fill="#c4c4c4"/><rect x="0.3" y="2.4" width="0.9" height="0.9" fill="#c4c4c4"/><rect x="0.3" y="4.3" width="0.9" height="0.9" fill="#c4c4c4"/><rect x="0.3" y="6.2" width="0.9" height="0.9" fill="#c4c4c4"/><rect x="1.8" y="0.5" width="0.9" height="0.9" fill="#c4c4c4"/><rect x="1.8" y="2.4" width="0.9" height="0.9" fill="#c4c4c4"/><rect x="1.8" y="4.3" width="0.9" height="0.9" fill="#c4c4c4"/><rect x="1.8" y="6.2" width="0.9" height="0.9" fill="#c4c4c4"/></svg>
<svg style="position:absolute;left:403.5px;top:96.5px;" width="9" height="9" viewBox="0 0 9 9"><circle cx="4.5" cy="4.5" r="3.8" fill="#1a8a6a"/><path d="M5.5 2.8 L3 4.5 L5.5 6.2Z" fill="#fff"/></svg>
<svg style="position:absolute;left:418.0px;top:96.5px;" width="9" height="9" viewBox="0 0 9 9"><circle cx="4.5" cy="4.5" r="3.8" fill="#1a8a6a"/><path d="M3.5 2.8 L6 4.5 L3.5 6.2Z" fill="#fff"/></svg>
<svg style="position:absolute;left:432.5px;top:96.5px;" width="9" height="9" viewBox="0 0 9 9"><rect x="0.5" y="1" width="8" height="7" fill="#fff" stroke="#666" stroke-width="0.6"/><path d="M0.5 3 H8.5" stroke="#666" stroke-width="0.6"/><rect x="3" y="4" width="3" height="2.5" fill="#3a78d0"/></svg>
<svg style="position:absolute;left:447.5px;top:96.5px;" width="9" height="9" viewBox="0 0 9 9"><circle cx="3.8" cy="3.8" r="2.8" fill="#fff" stroke="#444" stroke-width="0.7"/><path d="M6 6 L8.3 8.3" stroke="#444" stroke-width="0.9"/><path d="M2.5 3.8 H5.1 M3.8 2.5 V5.1" stroke="#2a7ad0" stroke-width="0.6"/></svg>
<svg style="position:absolute;left:461.5px;top:96.5px;" width="9" height="9" viewBox="0 0 9 9"><circle cx="3.8" cy="3.8" r="2.8" fill="#fff" stroke="#444" stroke-width="0.7"/><path d="M6 6 L8.3 8.3" stroke="#444" stroke-width="0.9"/><path d="M2.5 3.8 H5.1" stroke="#2a7ad0" stroke-width="0.6"/></svg>
<svg style="position:absolute;left:475.5px;top:100px;" width="8" height="2" viewBox="0 0 8 2"><circle cx="1.3" cy="1" r="0.55" fill="#555"/><circle cx="4" cy="1" r="0.55" fill="#555"/><circle cx="6.7" cy="1" r="0.55" fill="#555"/></svg>
<svg style="position:absolute;left:489.5px;top:97px;" width="3" height="8" viewBox="0 0 3 8"><rect x="0.3" y="0.5" width="0.9" height="0.9" fill="#c4c4c4"/><rect x="0.3" y="2.4" width="0.9" height="0.9" fill="#c4c4c4"/><rect x="0.3" y="4.3" width="0.9" height="0.9" fill="#c4c4c4"/><rect x="0.3" y="6.2" width="0.9" height="0.9" fill="#c4c4c4"/><rect x="1.8" y="0.5" width="0.9" height="0.9" fill="#c4c4c4"/><rect x="1.8" y="2.4" width="0.9" height="0.9" fill="#c4c4c4"/><rect x="1.8" y="4.3" width="0.9" height="0.9" fill="#c4c4c4"/><rect x="1.8" y="6.2" width="0.9" height="0.9" fill="#c4c4c4"/></svg>
<div style="left:569px;top:94.5px;width:13px;height:13px;background:#e6eefa;border:0.8px solid #5d95d3;border-radius:2px;"></div>
<div style="left:697px;top:94.5px;width:12.5px;height:13px;background:#e6eefa;border:0.8px solid #5d95d3;border-radius:2px;"></div>
<svg style="position:absolute;left:496.5px;top:96.5px;" width="9" height="9" viewBox="0 0 9 9"><rect x="0.5" y="1" width="8" height="7" fill="#fff" stroke="#666" stroke-width="0.6"/><rect x="3.5" y="3.5" width="2" height="2" fill="#3a78d0"/><path d="M0.5 3 H8.5" stroke="#666" stroke-width="0.5"/></svg>
<svg style="position:absolute;left:511.5px;top:96.5px;" width="9" height="9" viewBox="0 0 9 9"><rect x="0.5" y="1" width="8" height="7" fill="#fff" stroke="#666" stroke-width="0.6"/><path d="M0.5 4.5 H8.5" stroke="#3a78d0" stroke-width="1"/><path d="M0.5 3 H8.5" stroke="#666" stroke-width="0.5"/></svg>
<svg style="position:absolute;left:526.5px;top:96.5px;" width="9" height="9" viewBox="0 0 9 9"><rect x="0.5" y="1" width="8" height="7" fill="#fff" stroke="#666" stroke-width="0.6"/><path d="M0.5 4.5 H8.5" stroke="#3a78d0" stroke-width="1"/><path d="M0.5 3 H8.5" stroke="#666" stroke-width="0.5"/></svg>
<svg style="position:absolute;left:541.0px;top:96.5px;" width="9" height="9" viewBox="0 0 9 9"><rect x="0.5" y="1" width="8" height="7" fill="#cfe3f8" stroke="#3a78d0" stroke-width="0.6"/><path d="M0.5 3.5 H8.5 M0.5 5.7 H8.5 M3.2 1 V8 M5.8 1 V8" stroke="#3a78d0" stroke-width="0.5"/></svg>
<svg style="position:absolute;left:555.5px;top:96.5px;" width="9" height="9" viewBox="0 0 9 9"><rect x="0.5" y="1.5" width="6.5" height="5" fill="#fff" stroke="#666" stroke-width="0.6"/><circle cx="6.5" cy="6.5" r="2" fill="#fff" stroke="#e04040" stroke-width="0.7"/></svg>
<svg style="position:absolute;left:571.0px;top:96.5px;" width="9" height="9" viewBox="0 0 9 9"><rect x="0.5" y="1" width="8" height="7" fill="#fff" stroke="#666" stroke-width="0.6"/><rect x="1.5" y="2.5" width="3.5" height="2.5" fill="#3a78d0"/><path d="M5.5 5.5 H8" stroke="#666" stroke-width="0.5"/></svg>
<svg style="position:absolute;left:585.0px;top:96.5px;" width="9" height="9" viewBox="0 0 9 9"><rect x="0.5" y="1" width="8" height="7" fill="#fff" stroke="#666" stroke-width="0.6"/><path d="M2 3 H2.8 M2 4.7 H2.8 M2 6.4 H2.8" stroke="#2a9a4a" stroke-width="0.9"/><path d="M3.8 3 H7 M3.8 4.7 H7 M3.8 6.4 H7" stroke="#666" stroke-width="0.5"/></svg>
<svg style="position:absolute;left:599.5px;top:96.5px;" width="9" height="9" viewBox="0 0 9 9"><rect x="0.5" y="1" width="8" height="7" fill="#fff" stroke="#666" stroke-width="0.6"/><path d="M2 3 H2.8 M2 4.7 H2.8 M2 6.4 H2.8" stroke="#2a9a4a" stroke-width="0.9"/><path d="M3.8 3 H7 M3.8 4.7 H7 M3.8 6.4 H7" stroke="#666" stroke-width="0.5"/></svg>
<div style="left:610px;top:96px;width:33px;height:10px;background:#fff;border:0.6px solid #e4e4e4;border-radius:5px;"></div>
<svg style="position:absolute;left:611.5px;top:98px;" width="6" height="6" viewBox="0 0 6 6"><circle cx="3" cy="3" r="2.3" fill="#0f6cbd"/></svg>
<svg style="position:absolute;left:647.5px;top:100px;" width="8" height="2" viewBox="0 0 8 2"><circle cx="1.3" cy="1" r="0.55" fill="#555"/><circle cx="4" cy="1" r="0.55" fill="#555"/><circle cx="6.7" cy="1" r="0.55" fill="#555"/></svg>
<svg style="position:absolute;left:661.5px;top:97px;" width="3" height="8" viewBox="0 0 3 8"><rect x="0.3" y="0.5" width="0.9" height="0.9" fill="#c4c4c4"/><rect x="0.3" y="2.4" width="0.9" height="0.9" fill="#c4c4c4"/><rect x="0.3" y="4.3" width="0.9" height="0.9" fill="#c4c4c4"/><rect x="0.3" y="6.2" width="0.9" height="0.9" fill="#c4c4c4"/><rect x="1.8" y="0.5" width="0.9" height="0.9" fill="#c4c4c4"/><rect x="1.8" y="2.4" width="0.9" height="0.9" fill="#c4c4c4"/><rect x="1.8" y="4.3" width="0.9" height="0.9" fill="#c4c4c4"/><rect x="1.8" y="6.2" width="0.9" height="0.9" fill="#c4c4c4"/></svg>
<svg style="position:absolute;left:669.0px;top:96.5px;" width="9" height="9" viewBox="0 0 9 9"><rect x="0.5" y="1" width="8" height="7" fill="#fff" stroke="#666" stroke-width="0.6"/><path d="M0.5 3 H8.5" stroke="#666" stroke-width="0.6"/><rect x="3" y="4" width="3" height="2.5" fill="#3a78d0"/></svg>
<svg style="position:absolute;left:683.5px;top:96.5px;" width="9" height="9" viewBox="0 0 9 9"><rect x="0.5" y="1" width="8" height="6.5" fill="#fff" stroke="#666" stroke-width="0.6"/><circle cx="6" cy="5" r="1.3" fill="#2a7ad0"/><path d="M4 8.5 Q6 6 8 8.5" fill="#2a7ad0"/></svg>
<svg style="position:absolute;left:698.5px;top:96.5px;" width="9" height="9" viewBox="0 0 9 9"><circle cx="3.5" cy="2.5" r="1.8" fill="#2a7ad0"/><path d="M0.5 7 Q3.5 3.5 6.5 7Z" fill="#2a7ad0"/><rect x="4.5" y="4.5" width="4" height="4" fill="#aaa" stroke="#555" stroke-width="0.4"/></svg>
<svg style="position:absolute;left:712px;top:100px;" width="8" height="2" viewBox="0 0 8 2"><circle cx="1.3" cy="1" r="0.55" fill="#555"/><circle cx="4" cy="1" r="0.55" fill="#555"/><circle cx="6.7" cy="1" r="0.55" fill="#555"/></svg>
<svg style="position:absolute;left:725.5px;top:97px;" width="3" height="8" viewBox="0 0 3 8"><rect x="0.3" y="0.5" width="0.9" height="0.9" fill="#c4c4c4"/><rect x="0.3" y="2.4" width="0.9" height="0.9" fill="#c4c4c4"/><rect x="0.3" y="4.3" width="0.9" height="0.9" fill="#c4c4c4"/><rect x="0.3" y="6.2" width="0.9" height="0.9" fill="#c4c4c4"/><rect x="1.8" y="0.5" width="0.9" height="0.9" fill="#c4c4c4"/><rect x="1.8" y="2.4" width="0.9" height="0.9" fill="#c4c4c4"/><rect x="1.8" y="4.3" width="0.9" height="0.9" fill="#c4c4c4"/><rect x="1.8" y="6.2" width="0.9" height="0.9" fill="#c4c4c4"/></svg>
<svg style="position:absolute;left:731.0px;top:96.5px;" width="9" height="9" viewBox="0 0 9 9"><rect x="0.5" y="1" width="7" height="6.5" fill="#fff" stroke="#666" stroke-width="0.6"/><path d="M0.5 3 H7.5 M3 1 V7.5" stroke="#666" stroke-width="0.4"/><circle cx="6.5" cy="6.5" r="1.8" fill="#fff" stroke="#e04040" stroke-width="0.6"/></svg>
<svg style="position:absolute;left:743px;top:97px;" width="8" height="8" viewBox="0 0 8 8"><path d="M2.5 3.25 L4 4.75 L5.5 3.25" fill="none" stroke="#444" stroke-width="0.6"/></svg>
<svg style="position:absolute;left:755px;top:100px;" width="8" height="2" viewBox="0 0 8 2"><circle cx="1.3" cy="1" r="0.55" fill="#555"/><circle cx="4" cy="1" r="0.55" fill="#555"/><circle cx="6.7" cy="1" r="0.55" fill="#555"/></svg>
<div style="left:207px;top:109.3px;width:740px;height:0.8px;background:#dddddd;"></div>
<div style="left:209.1px;top:111.2px;width:97.6px;height:402.8px;background:#f3f3f3;border:0.8px solid #dedede;"></div>
<div class="t" style="left:214px;top:114.36px;font-size:8.03px;line-height:9.23px;color:#2a2a2a;transform:scaleX(0.91);transform-origin:left;font-weight:700;letter-spacing:-0.05px">Ressourcen</div>
<svg style="position:absolute;left:296.2px;top:115.5px;" width="7" height="7" viewBox="0 0 7 7"><path d="M0.8 1 H6.2 L4 3.5 V6 L3 5.3 V3.5Z" fill="none" stroke="#555" stroke-width="0.6"/><path d="M0.8 0.6 H6.2" stroke="#555" stroke-width="0.5"/></svg>
<div style="left:209.9px;top:126.5px;width:96px;height:387px;background:#fff;"></div>
<div style="left:213px;top:128.2px;width:92px;height:13.4px;background:#e6e6e6;border-radius:2px;"></div>
<svg style="position:absolute;left:218px;top:130.7px;" width="9" height="9" viewBox="0 0 9 9"><rect x="0.2" y="0.2" width="8.4" height="8.4" rx="1.3" fill="#0f6cbd"/><path d="M2 4.4 L3.6 6 L6.8 2.6" stroke="#fff" stroke-width="0.8" fill="none"/></svg>
<div class="t" style="left:228px;top:131.44px;font-size:6.16px;line-height:7.08px;color:#222;transform:scaleX(0.91);transform-origin:left;">Beamer1</div>
<svg style="position:absolute;left:218px;top:144.2px;" width="9" height="9" viewBox="0 0 9 9"><rect x="0.2" y="0.2" width="8.4" height="8.4" rx="1.3" fill="#0f6cbd"/><path d="M2 4.4 L3.6 6 L6.8 2.6" stroke="#fff" stroke-width="0.8" fill="none"/></svg>
<div class="t" style="left:228px;top:144.94px;font-size:6.16px;line-height:7.08px;color:#222;transform:scaleX(0.91);transform-origin:left;">Beamer2</div>
<svg style="position:absolute;left:218px;top:157.7px;" width="9" height="9" viewBox="0 0 9 9"><rect x="0.2" y="0.2" width="8.4" height="8.4" rx="1.3" fill="#0f6cbd"/><path d="M2 4.4 L3.6 6 L6.8 2.6" stroke="#fff" stroke-width="0.8" fill="none"/></svg>
<div class="t" style="left:228px;top:158.44px;font-size:6.16px;line-height:7.08px;color:#222;transform:scaleX(0.91);transform-origin:left;">Flipchart1</div>
<svg style="position:absolute;left:218px;top:171.2px;" width="9" height="9" viewBox="0 0 9 9"><rect x="0.2" y="0.2" width="8.4" height="8.4" rx="1.3" fill="#0f6cbd"/><path d="M2 4.4 L3.6 6 L6.8 2.6" stroke="#fff" stroke-width="0.8" fill="none"/></svg>
<div class="t" style="left:228px;top:171.94px;font-size:6.16px;line-height:7.08px;color:#222;transform:scaleX(0.91);transform-origin:left;">5000 (Lenovo T530)</div>
<svg style="position:absolute;left:218px;top:184.7px;" width="9" height="9" viewBox="0 0 9 9"><rect x="0.2" y="0.2" width="8.4" height="8.4" rx="1.3" fill="#0f6cbd"/><path d="M2 4.4 L3.6 6 L6.8 2.6" stroke="#fff" stroke-width="0.8" fill="none"/></svg>
<div class="t" style="left:228px;top:185.44px;font-size:6.16px;line-height:7.08px;color:#222;transform:scaleX(0.91);transform-origin:left;">5100 (Lenovo T530)</div>
<svg style="position:absolute;left:218px;top:198.2px;" width="9" height="9" viewBox="0 0 9 9"><rect x="0.2" y="0.2" width="8.4" height="8.4" rx="1.3" fill="#0f6cbd"/><path d="M2 4.4 L3.6 6 L6.8 2.6" stroke="#fff" stroke-width="0.8" fill="none"/></svg>
<div class="t" style="left:228px;top:198.94px;font-size:6.16px;line-height:7.08px;color:#222;transform:scaleX(0.91);transform-origin:left;">5300 (Lenovo T530)</div>
<svg style="position:absolute;left:218px;top:211.7px;" width="9" height="9" viewBox="0 0 9 9"><rect x="0.2" y="0.2" width="8.4" height="8.4" rx="1.3" fill="#0f6cbd"/><path d="M2 4.4 L3.6 6 L6.8 2.6" stroke="#fff" stroke-width="0.8" fill="none"/></svg>
<div class="t" style="left:228px;top:212.44px;font-size:6.16px;line-height:7.08px;color:#222;transform:scaleX(0.91);transform-origin:left;">5400 (Lenovo T530)</div>
<svg style="position:absolute;left:218px;top:225.2px;" width="9" height="9" viewBox="0 0 9 9"><rect x="0.2" y="0.2" width="8.4" height="8.4" rx="1.3" fill="#0f6cbd"/><path d="M2 4.4 L3.6 6 L6.8 2.6" stroke="#fff" stroke-width="0.8" fill="none"/></svg>
<div class="t" style="left:228px;top:225.94px;font-size:6.16px;line-height:7.08px;color:#222;transform:scaleX(0.91);transform-origin:left;">5500 (Lenovo T530)</div>
<svg style="position:absolute;left:218px;top:238.7px;" width="9" height="9" viewBox="0 0 9 9"><rect x="0.2" y="0.2" width="8.4" height="8.4" rx="1.3" fill="#0f6cbd"/><path d="M2 4.4 L3.6 6 L6.8 2.6" stroke="#fff" stroke-width="0.8" fill="none"/></svg>
<div class="t" style="left:228px;top:239.44px;font-size:6.16px;line-height:7.08px;color:#222;transform:scaleX(0.91);transform-origin:left;">5600 (Lenovo T530)</div>
<svg style="position:absolute;left:218px;top:252.2px;" width="9" height="9" viewBox="0 0 9 9"><rect x="0.2" y="0.2" width="8.4" height="8.4" rx="1.3" fill="#0f6cbd"/><path d="M2 4.4 L3.6 6 L6.8 2.6" stroke="#fff" stroke-width="0.8" fill="none"/></svg>
<div class="t" style="left:228px;top:252.94px;font-size:6.16px;line-height:7.08px;color:#222;transform:scaleX(0.91);transform-origin:left;">5700 (Lenovo T530)</div>
<div style="left:308.6px;top:110px;width:519.9px;height:405.5px;background:#fff;border:0.6px solid #e6e6e6;"></div>
<div style="left:314.4px;top:116px;width:23.8px;height:10.6px;background:#fff;border:0.7px solid #e2e2e2;border-radius:2px;"></div>
<div class="t" style="left:126.30000000000001px;width:400px;text-align:center;top:117.75px;font-size:6.49px;line-height:7.46px;color:#333;transform:scaleX(0.91);transform-origin:center;">Heute</div>
<div style="left:341.5px;top:116px;width:10.5px;height:10.6px;background:#fff;border:0.7px solid #e2e2e2;border-radius:2px;"></div>
<svg style="position:absolute;left:342.8px;top:117.3px;" width="8" height="8" viewBox="0 0 8 8"><path d="M5.0 2.0 L3.0 4 L5.0 6.0" fill="none" stroke="#444" stroke-width="0.6"/></svg>
<div style="left:355.5px;top:116px;width:10.5px;height:10.6px;background:#fff;border:0.7px solid #e2e2e2;border-radius:2px;"></div>
<svg style="position:absolute;left:356.8px;top:117.3px;" width="8" height="8" viewBox="0 0 8 8"><path d="M3.0 2.0 L5.0 4 L3.0 6.0" fill="none" stroke="#444" stroke-width="0.6"/></svg>
<div class="t" style="left:373.6px;top:117.17px;font-size:8.36px;line-height:9.61px;color:#222;transform:scaleX(0.91);transform-origin:left;letter-spacing:-0.25px">27. Januar - 14. Februar 2025</div>
<div style="left:324.4px;top:132px;width:491.30000000000007px;height:34.69999999999999px;background:#fff;border-top:0.7px solid #e4e4e4;border-left:0.7px solid #e4e4e4;"></div>
<div style="left:324.4px;top:146.5px;width:491.30000000000007px;height:0.7px;background:#e4e4e4;"></div>
<div style="left:324.4px;top:159.3px;width:491.30000000000007px;height:7.399999999999977px;background:#f0f0f0;border-top:0.7px solid #e4e4e4;"></div>
<div style="left:324.4px;top:132px;width:491.30000000000007px;height:14.5px;overflow:hidden;">
<div class="t" style="left:6.2px;top:2.90px;font-size:8.2px;line-height:9.4px;color:#333;letter-spacing:-0.05px;transform:scaleX(0.905);transform-origin:left">Montag, 27. Januar 2025 - Sonntag, 2. Februar 2025</div>
<div class="t" style="left:188.2px;top:2.90px;font-size:8.2px;line-height:9.4px;color:#333;letter-spacing:-0.05px;transform:scaleX(0.905);transform-origin:left">Montag, 3. Februar 2025 - Sonntag, 9. Februar 2025</div>
<div style="left:182.0px;top:0;width:0.7px;height:14.5px;background:#e4e4e4"></div>
<div class="t" style="left:370.2px;top:2.90px;font-size:8.2px;line-height:9.4px;color:#333;letter-spacing:-0.05px;transform:scaleX(0.905);transform-origin:left">Montag, 10. Februar 2025 - Sonntag, 16. Februar 2025</div>
<div style="left:364.0px;top:0;width:0.7px;height:14.5px;background:#e4e4e4"></div>
</div>
<div class="t" style="left:137.39999999999998px;width:400px;text-align:center;top:148.24px;font-size:8.25px;line-height:9.49px;color:#333;transform:scaleX(0.91);transform-origin:center;letter-spacing:-0.15px">27 Mo</div>
<div class="t" style="left:163.39999999999998px;width:400px;text-align:center;top:148.24px;font-size:8.25px;line-height:9.49px;color:#333;transform:scaleX(0.91);transform-origin:center;letter-spacing:-0.15px">28 Di</div>
<div style="left:350.4px;top:146.5px;width:0.7px;height:359.6px;background:#e6e6e6;"></div>
<div class="t" style="left:189.39999999999998px;width:400px;text-align:center;top:148.24px;font-size:8.25px;line-height:9.49px;color:#333;transform:scaleX(0.91);transform-origin:center;letter-spacing:-0.15px">29 Mi</div>
<div style="left:376.4px;top:146.5px;width:0.7px;height:359.6px;background:#e6e6e6;"></div>
<div class="t" style="left:215.39999999999998px;width:400px;text-align:center;top:148.24px;font-size:8.25px;line-height:9.49px;color:#333;transform:scaleX(0.91);transform-origin:center;letter-spacing:-0.15px">30 Do</div>
<div style="left:402.4px;top:146.5px;width:0.7px;height:359.6px;background:#e6e6e6;"></div>
<div class="t" style="left:241.39999999999998px;width:400px;text-align:center;top:148.24px;font-size:8.25px;line-height:9.49px;color:#333;transform:scaleX(0.91);transform-origin:center;letter-spacing:-0.15px">31 Fr</div>
<div style="left:428.4px;top:146.5px;width:0.7px;height:359.6px;background:#e6e6e6;"></div>
<div class="t" style="left:267.4px;width:400px;text-align:center;top:148.24px;font-size:8.25px;line-height:9.49px;color:#333;transform:scaleX(0.91);transform-origin:center;letter-spacing:-0.15px">1 Sa</div>
<div style="left:454.4px;top:146.5px;width:0.7px;height:359.6px;background:#e6e6e6;"></div>
<div class="t" style="left:293.4px;width:400px;text-align:center;top:148.24px;font-size:8.25px;line-height:9.49px;color:#333;transform:scaleX(0.91);transform-origin:center;letter-spacing:-0.15px">2 So</div>
<div style="left:480.4px;top:146.5px;width:0.7px;height:359.6px;background:#e6e6e6;"></div>
<div class="t" style="left:319.4px;width:400px;text-align:center;top:148.24px;font-size:8.25px;line-height:9.49px;color:#333;transform:scaleX(0.91);transform-origin:center;letter-spacing:-0.15px">3 Mo</div>
<div style="left:506.4px;top:132px;width:0.7px;height:374.1px;background:#e6e6e6;"></div>
<div class="t" style="left:345.4px;width:400px;text-align:center;top:148.24px;font-size:8.25px;line-height:9.49px;color:#333;transform:scaleX(0.91);transform-origin:center;letter-spacing:-0.15px">4 Di</div>
<div style="left:532.4px;top:146.5px;width:0.7px;height:359.6px;background:#e6e6e6;"></div>
<div class="t" style="left:371.4px;width:400px;text-align:center;top:148.24px;font-size:8.25px;line-height:9.49px;color:#333;transform:scaleX(0.91);transform-origin:center;letter-spacing:-0.15px">5 Mi</div>
<div style="left:558.4px;top:146.5px;width:0.7px;height:359.6px;background:#e6e6e6;"></div>
<div class="t" style="left:397.4px;width:400px;text-align:center;top:148.24px;font-size:8.25px;line-height:9.49px;color:#333;transform:scaleX(0.91);transform-origin:center;letter-spacing:-0.15px">6 Do</div>
<div style="left:584.4px;top:146.5px;width:0.7px;height:359.6px;background:#e6e6e6;"></div>
<div class="t" style="left:423.4px;width:400px;text-align:center;top:148.24px;font-size:8.25px;line-height:9.49px;color:#333;transform:scaleX(0.91);transform-origin:center;letter-spacing:-0.15px">7 Fr</div>
<div style="left:610.4px;top:146.5px;width:0.7px;height:359.6px;background:#e6e6e6;"></div>
<div class="t" style="left:449.4px;width:400px;text-align:center;top:148.24px;font-size:8.25px;line-height:9.49px;color:#333;transform:scaleX(0.91);transform-origin:center;letter-spacing:-0.15px">8 Sa</div>
<div style="left:636.4px;top:146.5px;width:0.7px;height:359.6px;background:#e6e6e6;"></div>
<div class="t" style="left:475.4px;width:400px;text-align:center;top:148.24px;font-size:8.25px;line-height:9.49px;color:#333;transform:scaleX(0.91);transform-origin:center;letter-spacing:-0.15px">9 So</div>
<div style="left:662.4px;top:146.5px;width:0.7px;height:359.6px;background:#e6e6e6;"></div>
<div class="t" style="left:501.4px;width:400px;text-align:center;top:148.24px;font-size:8.25px;line-height:9.49px;color:#333;transform:scaleX(0.91);transform-origin:center;letter-spacing:-0.15px">10 Mo</div>
<div style="left:688.4px;top:132px;width:0.7px;height:374.1px;background:#e6e6e6;"></div>
<div class="t" style="left:527.4px;width:400px;text-align:center;top:148.24px;font-size:8.25px;line-height:9.49px;color:#333;transform:scaleX(0.91);transform-origin:center;letter-spacing:-0.15px">11 Di</div>
<div style="left:714.4px;top:146.5px;width:0.7px;height:359.6px;background:#e6e6e6;"></div>
<div class="t" style="left:553.4px;width:400px;text-align:center;top:148.24px;font-size:8.25px;line-height:9.49px;color:#333;transform:scaleX(0.91);transform-origin:center;letter-spacing:-0.15px">12 Mi</div>
<div style="left:740.4px;top:146.5px;width:0.7px;height:359.6px;background:#e6e6e6;"></div>
<div class="t" style="left:579.4px;width:400px;text-align:center;top:148.24px;font-size:8.25px;line-height:9.49px;color:#333;transform:scaleX(0.91);transform-origin:center;letter-spacing:-0.15px">13 Do</div>
<div style="left:766.4px;top:146.5px;width:0.7px;height:359.6px;background:#e6e6e6;"></div>
<div class="t" style="left:605.4px;width:400px;text-align:center;top:148.24px;font-size:8.25px;line-height:9.49px;color:#333;transform:scaleX(0.91);transform-origin:center;letter-spacing:-0.15px">14 Fr</div>
<div style="left:792.4px;top:146.5px;width:0.7px;height:359.6px;background:#e6e6e6;"></div>
<div style="left:455.09999999999997px;top:166.7px;width:25.3px;height:339.40000000000003px;background:#f5f5f5;"></div>
<div style="left:481.09999999999997px;top:166.7px;width:25.3px;height:339.40000000000003px;background:#f5f5f5;"></div>
<div style="left:637.1px;top:166.7px;width:25.3px;height:339.40000000000003px;background:#f5f5f5;"></div>
<div style="left:663.1px;top:166.7px;width:25.3px;height:339.40000000000003px;background:#f5f5f5;"></div>
<div style="left:815.7px;top:132px;width:12.799999999999955px;height:383px;background:#f6f6f6;"></div>
<div style="left:821.2px;top:141px;width:0.9px;height:370px;background:#8a8a8a;"></div>
<div style="left:309.3px;top:166.7px;width:15.099999999999966px;height:33.94px;background:#f0a2b2;"></div>
<div class="t" style="left:166.89999999999998px;top:179.44px;width:300px;text-align:center;font-size:7.0px;line-height:8.05px;color:#333;transform:rotate(-90deg);">Beam...</div>
<div style="left:324.4px;top:200.29px;width:491.30000000000007px;height:0.7px;background:#e6e6e6;"></div>
<div style="left:324.7px;top:174.2px;width:11px;height:19.3px;background:#f6c4cf;border-radius:0 2px 2px 0;"></div>
<svg style="position:absolute;left:327.4px;top:180.89999999999998px;" width="5" height="6" viewBox="0 0 5 6"><path d="M3.8 1 V5 L1 3Z" fill="#111"/></svg>
<div style="left:309.3px;top:200.64px;width:15.099999999999966px;height:33.94px;background:#bfe2f5;"></div>
<div class="t" style="left:166.89999999999998px;top:213.38px;width:300px;text-align:center;font-size:7.0px;line-height:8.05px;color:#333;transform:rotate(-90deg);">Beam...</div>
<div style="left:324.4px;top:234.23px;width:491.30000000000007px;height:0.7px;background:#e6e6e6;"></div>
<div style="left:324.7px;top:208.14px;width:11px;height:19.3px;background:#d6edf9;border-radius:0 2px 2px 0;"></div>
<svg style="position:absolute;left:327.4px;top:214.83999999999997px;" width="5" height="6" viewBox="0 0 5 6"><path d="M3.8 1 V5 L1 3Z" fill="#111"/></svg>
<div style="left:309.3px;top:234.57999999999998px;width:15.099999999999966px;height:33.94px;background:#f4e49e;"></div>
<div class="t" style="left:166.89999999999998px;top:247.32px;width:300px;text-align:center;font-size:7.0px;line-height:8.05px;color:#333;transform:rotate(-90deg);">Flipch...</div>
<div style="left:324.4px;top:268.16999999999996px;width:491.30000000000007px;height:0.7px;background:#e6e6e6;"></div>
<div style="left:324.7px;top:242.07999999999998px;width:11px;height:19.3px;background:#f7edc0;border-radius:0 2px 2px 0;"></div>
<svg style="position:absolute;left:327.4px;top:248.77999999999997px;" width="5" height="6" viewBox="0 0 5 6"><path d="M3.8 1 V5 L1 3Z" fill="#111"/></svg>
<div style="left:309.3px;top:268.52px;width:15.099999999999966px;height:33.94px;background:#b4e0b4;"></div>
<div class="t" style="left:166.89999999999998px;top:281.27px;width:300px;text-align:center;font-size:7.0px;line-height:8.05px;color:#333;transform:rotate(-90deg);">5000...</div>
<div style="left:324.4px;top:302.10999999999996px;width:491.30000000000007px;height:0.7px;background:#e6e6e6;"></div>
<div style="left:325.6px;top:270.32px;width:127.6px;height:13.2px;background:#2a9a2a;border-radius:3.8px;"></div>
<svg style="position:absolute;left:329px;top:272.41999999999996px;" width="10" height="10" viewBox="0 0 10 10"><circle cx="5" cy="5" r="3.9" fill="#8c9c48"/><path d="M5 2.2 V5 L3.3 5" stroke="#222" stroke-width="0.6" fill="none"/></svg>
<div class="t" style="left:345.3px;top:273.40px;font-size:6.27px;line-height:7.21px;color:#fff;transform:scaleX(0.91);transform-origin:left;-webkit-text-stroke:0;">VDB Neujahresempfang 2025 - 0%</div>
<svg style="position:absolute;left:440px;top:272.41999999999996px;" width="10" height="10" viewBox="0 0 10 10"><circle cx="5" cy="5" r="3.9" fill="#a8d4a0"/><path d="M5 2.6 V5.4" stroke="#eef" stroke-width="0.7"/></svg>
<div style="left:309.3px;top:302.46px;width:15.099999999999966px;height:33.94px;background:#eaaad8;"></div>
<div class="t" style="left:166.89999999999998px;top:315.20px;width:300px;text-align:center;font-size:7.0px;line-height:8.05px;color:#333;transform:rotate(-90deg);">5100...</div>
<div style="left:324.4px;top:336.04999999999995px;width:491.30000000000007px;height:0.7px;background:#e6e6e6;"></div>
<div style="left:325.6px;top:304.26px;width:127.6px;height:13.2px;background:#2a9a2a;border-radius:3.8px;"></div>
<svg style="position:absolute;left:329px;top:306.35999999999996px;" width="10" height="10" viewBox="0 0 10 10"><circle cx="5" cy="5" r="3.9" fill="#8c9c48"/><path d="M5 2.2 V5 L3.3 5" stroke="#222" stroke-width="0.6" fill="none"/></svg>
<div class="t" style="left:345.3px;top:307.34px;font-size:6.27px;line-height:7.21px;color:#fff;transform:scaleX(0.91);transform-origin:left;-webkit-text-stroke:0;">VDB Neujahresempfang 2025 - 0%</div>
<svg style="position:absolute;left:440px;top:306.35999999999996px;" width="10" height="10" viewBox="0 0 10 10"><circle cx="5" cy="5" r="3.9" fill="#a8d4a0"/><path d="M5 2.6 V5.4" stroke="#eef" stroke-width="0.7"/></svg>
<div style="left:309.3px;top:336.4px;width:15.099999999999966px;height:33.94px;background:#a4e4e0;"></div>
<div class="t" style="left:166.89999999999998px;top:349.15px;width:300px;text-align:center;font-size:7.0px;line-height:8.05px;color:#333;transform:rotate(-90deg);">5300...</div>
<div style="left:324.4px;top:369.98999999999995px;width:491.30000000000007px;height:0.7px;background:#e6e6e6;"></div>
<div style="left:325.6px;top:338.2px;width:127.6px;height:13.2px;background:#2a9a2a;border-radius:3.8px;"></div>
<svg style="position:absolute;left:329px;top:340.29999999999995px;" width="10" height="10" viewBox="0 0 10 10"><circle cx="5" cy="5" r="3.9" fill="#8c9c48"/><path d="M5 2.2 V5 L3.3 5" stroke="#222" stroke-width="0.6" fill="none"/></svg>
<div class="t" style="left:345.3px;top:341.28px;font-size:6.27px;line-height:7.21px;color:#fff;transform:scaleX(0.91);transform-origin:left;-webkit-text-stroke:0;">VDB Neujahresempfang 2025 - 0%</div>
<svg style="position:absolute;left:440px;top:340.29999999999995px;" width="10" height="10" viewBox="0 0 10 10"><circle cx="5" cy="5" r="3.9" fill="#a8d4a0"/><path d="M5 2.6 V5.4" stroke="#eef" stroke-width="0.7"/></svg>
<div style="left:309.3px;top:370.34px;width:15.099999999999966px;height:33.94px;background:#f6c294;"></div>
<div class="t" style="left:166.89999999999998px;top:383.08px;width:300px;text-align:center;font-size:7.0px;line-height:8.05px;color:#333;transform:rotate(-90deg);">5400...</div>
<div style="left:324.4px;top:403.92999999999995px;width:491.30000000000007px;height:0.7px;background:#e6e6e6;"></div>
<div style="left:325.6px;top:372.14px;width:127.6px;height:13.2px;background:#2a9a2a;border-radius:3.8px;"></div>
<svg style="position:absolute;left:329px;top:374.23999999999995px;" width="10" height="10" viewBox="0 0 10 10"><circle cx="5" cy="5" r="3.9" fill="#8c9c48"/><path d="M5 2.2 V5 L3.3 5" stroke="#222" stroke-width="0.6" fill="none"/></svg>
<div class="t" style="left:345.3px;top:375.22px;font-size:6.27px;line-height:7.21px;color:#fff;transform:scaleX(0.91);transform-origin:left;-webkit-text-stroke:0;">VDB Neujahresempfang 2025 - 0%</div>
<svg style="position:absolute;left:440px;top:374.23999999999995px;" width="10" height="10" viewBox="0 0 10 10"><circle cx="5" cy="5" r="3.9" fill="#a8d4a0"/><path d="M5 2.6 V5.4" stroke="#eef" stroke-width="0.7"/></svg>
<div style="left:309.3px;top:404.28px;width:15.099999999999966px;height:33.94px;background:#cacaca;"></div>
<div class="t" style="left:166.89999999999998px;top:417.03px;width:300px;text-align:center;font-size:7.0px;line-height:8.05px;color:#333;transform:rotate(-90deg);">5500...</div>
<div style="left:324.4px;top:437.86999999999995px;width:491.30000000000007px;height:0.7px;background:#e6e6e6;"></div>
<div style="left:325.6px;top:406.08px;width:127.6px;height:13.2px;background:#2a9a2a;border-radius:3.8px;"></div>
<svg style="position:absolute;left:329px;top:408.17999999999995px;" width="10" height="10" viewBox="0 0 10 10"><circle cx="5" cy="5" r="3.9" fill="#8c9c48"/><path d="M5 2.2 V5 L3.3 5" stroke="#222" stroke-width="0.6" fill="none"/></svg>
<div class="t" style="left:345.3px;top:409.16px;font-size:6.27px;line-height:7.21px;color:#fff;transform:scaleX(0.91);transform-origin:left;-webkit-text-stroke:0;">VDB Neujahresempfang 2025 - 0%</div>
<svg style="position:absolute;left:440px;top:408.17999999999995px;" width="10" height="10" viewBox="0 0 10 10"><circle cx="5" cy="5" r="3.9" fill="#a8d4a0"/><path d="M5 2.6 V5.4" stroke="#eef" stroke-width="0.7"/></svg>
<div style="left:309.3px;top:438.21999999999997px;width:15.099999999999966px;height:33.94px;background:#dcbcac;"></div>
<div class="t" style="left:166.89999999999998px;top:450.96px;width:300px;text-align:center;font-size:7.0px;line-height:8.05px;color:#333;transform:rotate(-90deg);">5600...</div>
<div style="left:324.4px;top:471.80999999999995px;width:491.30000000000007px;height:0.7px;background:#e6e6e6;"></div>
<div style="left:324.7px;top:445.71999999999997px;width:11px;height:19.3px;background:#e8d4c8;border-radius:0 2px 2px 0;"></div>
<svg style="position:absolute;left:327.4px;top:452.41999999999996px;" width="5" height="6" viewBox="0 0 5 6"><path d="M3.8 1 V5 L1 3Z" fill="#111"/></svg>
<div style="left:309.3px;top:472.15999999999997px;width:15.099999999999966px;height:33.94px;background:#aee488;"></div>
<div class="t" style="left:166.89999999999998px;top:484.91px;width:300px;text-align:center;font-size:7.0px;line-height:8.05px;color:#333;transform:rotate(-90deg);">5700...</div>
<div style="left:324.4px;top:505.74999999999994px;width:491.30000000000007px;height:0.7px;background:#e6e6e6;"></div>
<div style="left:325.6px;top:473.96px;width:127.6px;height:13.2px;background:#2a9a2a;border-radius:3.8px;border:1px solid #0b3d0b;"></div>
<svg style="position:absolute;left:329px;top:476.05999999999995px;" width="10" height="10" viewBox="0 0 10 10"><circle cx="5" cy="5" r="3.9" fill="#8c9c48"/><path d="M5 2.2 V5 L3.3 5" stroke="#222" stroke-width="0.6" fill="none"/></svg>
<div class="t" style="left:345.3px;top:477.04px;font-size:6.27px;line-height:7.21px;color:#fff;transform:scaleX(0.91);transform-origin:left;-webkit-text-stroke:0;">VDB Neujahresempfang 2025 - 0%</div>
<svg style="position:absolute;left:440px;top:476.05999999999995px;" width="10" height="10" viewBox="0 0 10 10"><circle cx="5" cy="5" r="3.9" fill="#a8d4a0"/><path d="M5 2.6 V5.4" stroke="#eef" stroke-width="0.7"/></svg>
<div style="left:309.5px;top:506.4px;width:519px;height:9px;background:#f3f3f3;"></div>
<div style="left:803.5px;top:175px;width:12.2px;height:18px;background:#f0b0bd;border-radius:2px 0 0 2px;"></div>
<div style="left:828.7px;top:110.7px;width:116.3px;height:405px;background:#f3f3f3;border:0.6px solid #e0e0e0;"></div>
<div class="t" style="left:834px;top:114.77px;font-size:8.36px;line-height:9.61px;color:#2a2a2a;transform:scaleX(0.91);transform-origin:left;font-weight:700;letter-spacing:-0.1px">Navigation</div>
<svg style="position:absolute;left:934.5px;top:115.2px;" width="7" height="7" viewBox="0 0 7 7"><path d="M0.8 1 H6.2 L4 3.5 V6 L3 5.3 V3.5Z" fill="none" stroke="#555" stroke-width="0.6"/><path d="M0.8 0.6 H6.2" stroke="#555" stroke-width="0.5"/></svg>
<div style="left:830.5px;top:126.5px;width:114px;height:389px;background:#fff;border:0.6px solid #e4e4e4;"></div>
<svg style="position:absolute;left:838.5px;top:139.5px;" width="5" height="5" viewBox="0 0 5 5"><path d="M4 0.5 V4.5 L1 2.5Z" fill="#222"/></svg>
<div class="t" style="left:663.5px;width:400px;text-align:center;top:137.94px;font-size:6.16px;line-height:7.08px;color:#333;transform:scaleX(0.91);transform-origin:center;">Februar</div>
<svg style="position:absolute;left:884px;top:139.5px;" width="5" height="5" viewBox="0 0 5 5"><path d="M1 0.5 V4.5 L4 2.5Z" fill="#222"/></svg>
<svg style="position:absolute;left:899.5px;top:139.5px;" width="5" height="5" viewBox="0 0 5 5"><path d="M4 0.5 V4.5 L1 2.5Z" fill="#222"/></svg>
<div class="t" style="left:719px;width:400px;text-align:center;top:137.94px;font-size:6.16px;line-height:7.08px;color:#333;transform:scaleX(0.91);transform-origin:center;">2025</div>
<svg style="position:absolute;left:931px;top:139.5px;" width="5" height="5" viewBox="0 0 5 5"><path d="M1 0.5 V4.5 L4 2.5Z" fill="#222"/></svg>
<div class="t" style="left:648.5px;width:400px;text-align:center;top:152.57px;font-size:5.94px;line-height:6.83px;color:#3a3a3a;transform:scaleX(0.91);transform-origin:center;">MO</div>
<div class="t" style="left:662.8px;width:400px;text-align:center;top:152.57px;font-size:5.94px;line-height:6.83px;color:#3a3a3a;transform:scaleX(0.91);transform-origin:center;">DI</div>
<div class="t" style="left:677px;width:400px;text-align:center;top:152.57px;font-size:5.94px;line-height:6.83px;color:#3a3a3a;transform:scaleX(0.91);transform-origin:center;">MI</div>
<div class="t" style="left:691px;width:400px;text-align:center;top:152.57px;font-size:5.94px;line-height:6.83px;color:#3a3a3a;transform:scaleX(0.91);transform-origin:center;">DO</div>
<div class="t" style="left:705px;width:400px;text-align:center;top:152.57px;font-size:5.94px;line-height:6.83px;color:#3a3a3a;transform:scaleX(0.91);transform-origin:center;">FR</div>
<div class="t" style="left:719.3px;width:400px;text-align:center;top:152.57px;font-size:5.94px;line-height:6.83px;color:#3a3a3a;transform:scaleX(0.91);transform-origin:center;">SA</div>
<div class="t" style="left:733.2px;width:400px;text-align:center;top:152.57px;font-size:5.94px;line-height:6.83px;color:#3a3a3a;transform:scaleX(0.91);transform-origin:center;">SO</div>
<div style="left:843px;top:162px;width:97px;height:19px;background:#eaf3fc;"></div>
<div class="t" style="left:648.5px;width:400px;text-align:center;top:164.12px;font-size:6.38px;line-height:7.34px;color:#222;transform:scaleX(0.91);transform-origin:center;font-weight:700;">27</div>
<div class="t" style="left:662.8px;width:400px;text-align:center;top:164.12px;font-size:6.38px;line-height:7.34px;color:#222;transform:scaleX(0.91);transform-origin:center;font-weight:700;">28</div>
<div class="t" style="left:677px;width:400px;text-align:center;top:164.12px;font-size:6.38px;line-height:7.34px;color:#222;transform:scaleX(0.91);transform-origin:center;font-weight:700;">29</div>
<div class="t" style="left:691px;width:400px;text-align:center;top:164.12px;font-size:6.38px;line-height:7.34px;color:#222;transform:scaleX(0.91);transform-origin:center;font-weight:700;">30</div>
<div class="t" style="left:705px;width:400px;text-align:center;top:164.12px;font-size:6.38px;line-height:7.34px;color:#222;transform:scaleX(0.91);transform-origin:center;font-weight:700;">31</div>
<div class="t" style="left:719.3px;width:400px;text-align:center;top:164.12px;font-size:6.38px;line-height:7.34px;color:#222;transform:scaleX(0.91);transform-origin:center;">1</div>
<div class="t" style="left:733.2px;width:400px;text-align:center;top:164.12px;font-size:6.38px;line-height:7.34px;color:#222;transform:scaleX(0.91);transform-origin:center;">2</div>
<div class="t" style="left:648.5px;width:400px;text-align:center;top:172.82px;font-size:6.38px;line-height:7.34px;color:#333;transform:scaleX(0.91);transform-origin:center;">3</div>
<div class="t" style="left:662.8px;width:400px;text-align:center;top:172.82px;font-size:6.38px;line-height:7.34px;color:#333;transform:scaleX(0.91);transform-origin:center;">4</div>
<div class="t" style="left:677px;width:400px;text-align:center;top:172.82px;font-size:6.38px;line-height:7.34px;color:#333;transform:scaleX(0.91);transform-origin:center;">5</div>
<div class="t" style="left:691px;width:400px;text-align:center;top:172.82px;font-size:6.38px;line-height:7.34px;color:#333;transform:scaleX(0.91);transform-origin:center;">6</div>
<div class="t" style="left:705px;width:400px;text-align:center;top:172.82px;font-size:6.38px;line-height:7.34px;color:#333;transform:scaleX(0.91);transform-origin:center;">7</div>
<div class="t" style="left:719.3px;width:400px;text-align:center;top:172.82px;font-size:6.38px;line-height:7.34px;color:#333;transform:scaleX(0.91);transform-origin:center;">8</div>
<div class="t" style="left:733.2px;width:400px;text-align:center;top:172.82px;font-size:6.38px;line-height:7.34px;color:#333;transform:scaleX(0.91);transform-origin:center;">9</div>
<div class="t" style="left:637.5px;width:400px;text-align:center;top:164.14px;font-size:4.95px;line-height:5.69px;color:#666;transform:scaleX(0.91);transform-origin:center;">5</div>
<div class="t" style="left:637.5px;width:400px;text-align:center;top:173.64px;font-size:4.95px;line-height:5.69px;color:#666;transform:scaleX(0.91);transform-origin:center;">6</div>
<div style="left:955px;top:76px;width:15px;height:439px;background:#bcd3ec;border-radius:2.5px 2.5px 0 0;"></div>
<svg style="position:absolute;left:958.5px;top:81.5px;" width="8" height="8" viewBox="0 0 8 8"><path d="M4.9 2.2 L3.1 4 L4.9 5.8" fill="none" stroke="#444" stroke-width="0.6"/></svg>
<div class="t" style="left:812.5px;top:129.80px;width:300px;text-align:center;font-size:7.3px;line-height:8.39px;color:#222;transform:rotate(-90deg);">Zur Ressourcenbuchung</div>
<svg style="position:absolute;left:958.5px;top:182px;" width="9" height="8" viewBox="0 0 9 8"><rect x="0" y="0" width="9" height="6" fill="#7ec0ea"/><path d="M0 6 L9 0 V6Z" fill="#b8dcf4"/><path d="M0 7.5 H9" stroke="#7a8a9a" stroke-width="0.6" stroke-dasharray="1 0.8"/></svg>
<div style="left:970px;top:76px;width:5.5px;height:439px;background:#fff;border:0.6px solid #dadada;"></div>
<div style="left:982px;top:75px;width:16.5px;height:104px;background:#bcd3ec;border-radius:3px 3px 3px 3px;"></div>
<svg style="position:absolute;left:983.5px;top:79px;" width="13" height="14" viewBox="0 0 13 14"><circle cx="5" cy="5" r="4.2" fill="#eef2f6" stroke="#8a96a4" stroke-width="0.8"/><path d="M5 5 L3 2.5 M5 5 L7.3 3" stroke="#f28c28" stroke-width="0.8"/><rect x="5.5" y="6.5" width="7.5" height="7" fill="#fff"/><rect x="5.5" y="6.5" width="7.5" height="2" fill="#f28c28"/><text x="9.2" y="13.2" font-size="4.5" text-anchor="middle" font-family="Liberation Sans" fill="#333" font-weight="700">12</text></svg>
<div class="t" style="left:840.2px;top:129.97px;width:300px;text-align:center;font-size:7.0px;line-height:8.05px;color:#222;transform:rotate(90deg);">Ressourcenbuchungen</div>
<div style="left:0px;top:521.5px;width:1000px;height:20px;background:#f6f6f6;"></div>
<div style="left:0px;top:524px;width:1000px;height:0.6px;background:#e4e4e4;"></div>
<div style="left:0px;top:541.5px;width:1000px;height:4.5px;background:#000;"></div>
<div style="left:307px;top:541.5px;width:24px;height:4.5px;background:#2a2a2a;"></div>
<div class="t" style="left:755px;width:400px;text-align:center;top:542.01px;font-size:6.05px;line-height:6.96px;color:#aaa;transform:scaleX(0.91);transform-origin:center;">09:13</div>
<div style="left:467.8px;top:181.2px;width:484.99999999999994px;height:336.59999999999997px;background:#f3f3f3;border:0.8px solid #5a9ad8;box-shadow:0 8px 20px rgba(0,0,0,0.42);"></div>
<div style="left:467.8px;top:181.2px;width:484.99999999999994px;height:21.5px;background:#0067c0;"></div>
<svg style="position:absolute;left:474.5px;top:189px;" width="8" height="6" viewBox="0 0 8 6"><rect x="0.3" y="0.6" width="7.4" height="4.6" rx="0.8" fill="#c8d4e0"/><rect x="1.3" y="1.6" width="2" height="2" fill="#5a6a7a"/><rect x="4.2" y="1.6" width="2.5" height="2" fill="#8a9aaa"/></svg>
<div class="t" style="left:509.5px;width:400px;text-align:center;top:188.91px;font-size:6.05px;line-height:6.96px;color:#e8f0fa;transform:scaleX(0.91);transform-origin:center;">Beamer1 (Ressource)</div>
<svg style="position:absolute;left:871.5px;top:188px;" width="8" height="8" viewBox="0 0 8 8"><rect x="0.5" y="0.5" width="7" height="6.5" fill="none" stroke="#d8e6f6" stroke-width="0.6"/><path d="M0.5 2 H7.5" stroke="#d8e6f6" stroke-width="0.6"/><path d="M2.8 5.4 L4 4 L5.2 5.4" stroke="#d8e6f6" stroke-width="0.6" fill="none"/></svg>
<svg style="position:absolute;left:894px;top:191.5px;" width="8" height="2" viewBox="0 0 8 2"><path d="M0.5 1 H7.5" stroke="#d8e6f6" stroke-width="0.7"/></svg>
<svg style="position:absolute;left:915.5px;top:188px;" width="8" height="8" viewBox="0 0 8 8"><rect x="1" y="1" width="6" height="6" fill="none" stroke="#d8e6f6" stroke-width="0.7"/></svg>
<svg style="position:absolute;left:937.5px;top:188px;" width="8" height="8" viewBox="0 0 8 8"><path d="M1 1 L7 7 M7 1 L1 7" stroke="#d8e6f6" stroke-width="0.8"/></svg>
<div style="left:468.6px;top:202.2px;width:15.5px;height:314.79999999999995px;background:#bcd3ec;"></div>
<svg style="position:absolute;left:471.8px;top:210px;" width="8" height="8" viewBox="0 0 8 8"><path d="M4.9 2.2 L3.1 4 L4.9 5.8" fill="none" stroke="#444" stroke-width="0.6"/></svg>
<div class="t" style="left:325.6px;top:251.83px;width:300px;text-align:center;font-size:7.25px;line-height:8.34px;color:#222;transform:rotate(-90deg);">Einzelne Ressource</div>
<svg style="position:absolute;left:469px;top:290.5px;" width="13" height="14" viewBox="0 0 13 14"><path d="M7 7.3 L11.3 2.3 M7 7.3 L2.5 7.3 M7 7.3 L10.8 12" stroke="#f28c28" stroke-width="0.9" fill="none"/><circle cx="11.3" cy="2.3" r="1.1" fill="#f28c28"/><circle cx="7" cy="7.3" r="1.0" fill="#f28c28"/><circle cx="2.5" cy="7.3" r="1.1" fill="#f28c28"/><circle cx="10.8" cy="12" r="1.1" fill="#f28c28"/></svg>
<div style="left:484px;top:205.4px;width:122.6px;height:311.59999999999997px;background:#fff;border:0.6px solid #dcdcdc;border-bottom:none;"></div>
<svg style="position:absolute;left:486.5px;top:208.5px;" width="9" height="7" viewBox="0 0 9 7"><rect x="1.5" y="0.5" width="5" height="6" rx="1" fill="#1a8a6a"/><rect x="3" y="1.5" width="2" height="4" fill="#fff"/><circle cx="0.8" cy="3.5" r="0.6" fill="#1a8a6a"/><circle cx="8.2" cy="3.5" r="0.6" fill="#1a8a6a"/></svg>
<div style="left:484.6px;top:217.8px;width:121.4px;height:0.6px;background:#ececec;"></div>
<div style="left:484.6px;top:240.6px;width:121.4px;height:11.4px;background:#e6e6e6;"></div>
<svg style="position:absolute;left:486px;top:219.5px;" width="8" height="8" viewBox="0 0 8 8"><path d="M1.7000000000000002 2.85 L4 5.15 L6.3 2.85" fill="none" stroke="#333" stroke-width="0.75"/></svg>
<svg style="position:absolute;left:499px;top:220.5px;" width="7" height="6" viewBox="0 0 7 6"><path d="M0 0.5 h2.6 l0.8 0.9 H7 V6 H0Z" fill="#f7b03c"/><rect x="0" y="2" width="7" height="4" fill="#fbbf4f"/><rect x="0.6" y="2.4" width="5.8" height="0.6" fill="#fff3d6" opacity="0.8"/></svg>
<div class="t" style="left:510px;top:220.01px;font-size:6.05px;line-height:6.96px;color:#2a2a2a;transform:scaleX(0.91);transform-origin:left;">Einzelne Ressource</div>
<svg style="position:absolute;left:498.5px;top:231px;" width="8" height="8" viewBox="0 0 8 8"><path d="M1.7000000000000002 2.85 L4 5.15 L6.3 2.85" fill="none" stroke="#333" stroke-width="0.75"/></svg>
<svg style="position:absolute;left:512px;top:232.0px;" width="7" height="6" viewBox="0 0 7 6"><path d="M0 0.5 h2.6 l0.8 0.9 H7 V6 H0Z" fill="#f7b03c"/><rect x="0" y="2" width="7" height="4" fill="#fbbf4f"/><rect x="0.6" y="2.4" width="5.8" height="0.6" fill="#fff3d6" opacity="0.8"/></svg>
<div class="t" style="left:523px;top:231.51px;font-size:6.05px;line-height:6.96px;color:#2a2a2a;transform:scaleX(0.91);transform-origin:left;">Auf einen Blick</div>
<svg style="position:absolute;left:524px;top:242.8px;" width="7" height="7" viewBox="0 0 7 7"><rect x="0" y="0" width="7" height="7" fill="#8aa0b8"/><rect x="0.5" y="0.5" width="3.2" height="3" fill="#c040c0"/><rect x="4.2" y="1" width="2.3" height="0.7" fill="#fff"/><rect x="0.8" y="4.5" width="5.4" height="0.7" fill="#fff"/></svg>
<div class="t" style="left:535px;top:242.81px;font-size:6.05px;line-height:6.96px;color:#2a2a2a;transform:scaleX(0.91);transform-origin:left;">Überblick</div>
<svg style="position:absolute;left:498.5px;top:253.5px;" width="8" height="8" viewBox="0 0 8 8"><path d="M1.7000000000000002 2.85 L4 5.15 L6.3 2.85" fill="none" stroke="#333" stroke-width="0.75"/></svg>
<svg style="position:absolute;left:512px;top:254.5px;" width="7" height="6" viewBox="0 0 7 6"><path d="M0 0.5 h2.6 l0.8 0.9 H7 V6 H0Z" fill="#f7b03c"/><rect x="0" y="2" width="7" height="4" fill="#fbbf4f"/><rect x="0.6" y="2.4" width="5.8" height="0.6" fill="#fff3d6" opacity="0.8"/></svg>
<div class="t" style="left:523px;top:254.01px;font-size:6.05px;line-height:6.96px;color:#2a2a2a;transform:scaleX(0.91);transform-origin:left;">Buchungen</div>
<svg style="position:absolute;left:511px;top:265px;" width="8" height="8" viewBox="0 0 8 8"><path d="M1.7000000000000002 2.85 L4 5.15 L6.3 2.85" fill="none" stroke="#333" stroke-width="0.75"/></svg>
<svg style="position:absolute;left:524px;top:266.0px;" width="7" height="6" viewBox="0 0 7 6"><path d="M0 0.5 h2.6 l0.8 0.9 H7 V6 H0Z" fill="#f7b03c"/><rect x="0" y="2" width="7" height="4" fill="#fbbf4f"/><rect x="0.6" y="2.4" width="5.8" height="0.6" fill="#fff3d6" opacity="0.8"/></svg>
<div class="t" style="left:535px;top:265.51px;font-size:6.05px;line-height:6.96px;color:#2a2a2a;transform:scaleX(0.91);transform-origin:left;">Aktuelle</div>
<svg style="position:absolute;left:537px;top:277.1px;" width="7" height="7" viewBox="0 0 7 7"><rect x="0.3" y="0.8" width="6.4" height="5.9" fill="#fff" stroke="#bbb" stroke-width="0.4"/><rect x="0.3" y="0.8" width="6.4" height="1.8" fill="#d9355a"/><rect x="2.6" y="3.6" width="1.8" height="2.4" fill="#d9355a" opacity="0.8"/></svg>
<div class="t" style="left:548px;top:277.11px;font-size:6.05px;line-height:6.96px;color:#2a2a2a;transform:scaleX(0.91);transform-origin:left;">Kalender</div>
<svg style="position:absolute;left:537px;top:288.6px;" width="7" height="7" viewBox="0 0 7 7"><rect x="0.3" y="0.3" width="1.9" height="1.9" fill="#c070d8"/><rect x="0.3" y="2.5999999999999996" width="1.9" height="1.9" fill="#c070d8"/><rect x="0.3" y="4.8999999999999995" width="1.9" height="1.9" fill="#c070d8"/><rect x="2.5999999999999996" y="0.3" width="1.9" height="1.9" fill="#c070d8"/><rect x="2.5999999999999996" y="2.5999999999999996" width="1.9" height="1.9" fill="#c070d8"/><rect x="2.5999999999999996" y="4.8999999999999995" width="1.9" height="1.9" fill="#c070d8"/><rect x="4.8999999999999995" y="0.3" width="1.9" height="1.9" fill="#c070d8"/><rect x="4.8999999999999995" y="2.5999999999999996" width="1.9" height="1.9" fill="#c070d8"/><rect x="4.8999999999999995" y="4.8999999999999995" width="1.9" height="1.9" fill="#c070d8"/></svg>
<div class="t" style="left:548px;top:288.61px;font-size:6.05px;line-height:6.96px;color:#2a2a2a;transform:scaleX(0.91);transform-origin:left;">Liste</div>
<svg style="position:absolute;left:511px;top:299.6px;" width="8" height="8" viewBox="0 0 8 8"><path d="M1.7000000000000002 2.85 L4 5.15 L6.3 2.85" fill="none" stroke="#333" stroke-width="0.75"/></svg>
<svg style="position:absolute;left:524px;top:300.6px;" width="7" height="6" viewBox="0 0 7 6"><path d="M0 0.5 h2.6 l0.8 0.9 H7 V6 H0Z" fill="#f7b03c"/><rect x="0" y="2" width="7" height="4" fill="#fbbf4f"/><rect x="0.6" y="2.4" width="5.8" height="0.6" fill="#fff3d6" opacity="0.8"/></svg>
<div class="t" style="left:535px;top:300.11px;font-size:6.05px;line-height:6.96px;color:#2a2a2a;transform:scaleX(0.91);transform-origin:left;">In Bearbeitung</div>
<svg style="position:absolute;left:537px;top:311.5px;" width="7" height="7" viewBox="0 0 7 7"><rect x="0.3" y="0.3" width="1.9" height="1.9" fill="#c070d8"/><rect x="0.3" y="2.5999999999999996" width="1.9" height="1.9" fill="#c070d8"/><rect x="0.3" y="4.8999999999999995" width="1.9" height="1.9" fill="#c070d8"/><rect x="2.5999999999999996" y="0.3" width="1.9" height="1.9" fill="#c070d8"/><rect x="2.5999999999999996" y="2.5999999999999996" width="1.9" height="1.9" fill="#c070d8"/><rect x="2.5999999999999996" y="4.8999999999999995" width="1.9" height="1.9" fill="#c070d8"/><rect x="4.8999999999999995" y="0.3" width="1.9" height="1.9" fill="#c070d8"/><rect x="4.8999999999999995" y="2.5999999999999996" width="1.9" height="1.9" fill="#c070d8"/><rect x="4.8999999999999995" y="4.8999999999999995" width="1.9" height="1.9" fill="#c070d8"/></svg>
<div class="t" style="left:548px;top:311.51px;font-size:6.05px;line-height:6.96px;color:#2a2a2a;transform:scaleX(0.91);transform-origin:left;">Liste</div>
<svg style="position:absolute;left:511px;top:322.5px;" width="8" height="8" viewBox="0 0 8 8"><path d="M2.85 1.7000000000000002 L5.15 4 L2.85 6.3" fill="none" stroke="#333" stroke-width="0.75"/></svg>
<svg style="position:absolute;left:524px;top:323.5px;" width="7" height="6" viewBox="0 0 7 6"><path d="M0 0.5 h2.6 l0.8 0.9 H7 V6 H0Z" fill="#e04848"/><rect x="0" y="2" width="7" height="4" fill="#f07070"/><rect x="2" y="3" width="3" height="2" fill="#fff" opacity="0.6"/></svg>
<div class="t" style="left:535px;top:323.01px;font-size:6.05px;line-height:6.96px;color:#2a2a2a;transform:scaleX(0.91);transform-origin:left;">Ungefiltert</div>
<svg style="position:absolute;left:498.5px;top:334px;" width="8" height="8" viewBox="0 0 8 8"><path d="M1.7000000000000002 2.85 L4 5.15 L6.3 2.85" fill="none" stroke="#333" stroke-width="0.75"/></svg>
<svg style="position:absolute;left:512px;top:335.0px;" width="7" height="6" viewBox="0 0 7 6"><path d="M0 0.5 h2.6 l0.8 0.9 H7 V6 H0Z" fill="#f7b03c"/><rect x="0" y="2" width="7" height="4" fill="#fbbf4f"/><rect x="0.6" y="2.4" width="5.8" height="0.6" fill="#fff3d6" opacity="0.8"/></svg>
<div class="t" style="left:523px;top:334.51px;font-size:6.05px;line-height:6.96px;color:#2a2a2a;transform:scaleX(0.91);transform-origin:left;">Dokumente</div>
<svg style="position:absolute;left:524px;top:345.4px;" width="7" height="8" viewBox="0 0 7 8"><path d="M0.3 0.3 H4.5 L6.7 2.5 V7.7 H0.3Z" fill="#f48fb1"/><circle cx="3.5" cy="4.2" r="1.6" fill="#fff" stroke="#c2185b" stroke-width="0.6"/></svg>
<div class="t" style="left:535px;top:345.91px;font-size:6.05px;line-height:6.96px;color:#2a2a2a;transform:scaleX(0.91);transform-origin:left;">Dokumente zur Ressource</div>
<svg style="position:absolute;left:498.5px;top:357px;" width="8" height="8" viewBox="0 0 8 8"><path d="M1.7000000000000002 2.85 L4 5.15 L6.3 2.85" fill="none" stroke="#333" stroke-width="0.75"/></svg>
<svg style="position:absolute;left:512px;top:358.0px;" width="7" height="6" viewBox="0 0 7 6"><path d="M0 0.5 h2.6 l0.8 0.9 H7 V6 H0Z" fill="#f7b03c"/><rect x="0" y="2" width="7" height="4" fill="#fbbf4f"/><rect x="0.6" y="2.4" width="5.8" height="0.6" fill="#fff3d6" opacity="0.8"/></svg>
<div class="t" style="left:523px;top:357.51px;font-size:6.05px;line-height:6.96px;color:#2a2a2a;transform:scaleX(0.91);transform-origin:left;">Interaktionen</div>
<svg style="position:absolute;left:524px;top:369.5px;" width="8" height="6" viewBox="0 0 8 6"><rect x="0" y="0.5" width="5" height="5" fill="#c8b040"/><rect x="4.5" y="1.5" width="3" height="3" fill="#9a8a30"/></svg>
<div class="t" style="left:535px;top:369.01px;font-size:6.05px;line-height:6.96px;color:#2a2a2a;transform:scaleX(0.91);transform-origin:left;">Kommentare</div>
<svg style="position:absolute;left:498.5px;top:380px;" width="8" height="8" viewBox="0 0 8 8"><path d="M1.7000000000000002 2.85 L4 5.15 L6.3 2.85" fill="none" stroke="#333" stroke-width="0.75"/></svg>
<svg style="position:absolute;left:512px;top:381.0px;" width="7" height="6" viewBox="0 0 7 6"><path d="M0 0.5 h2.6 l0.8 0.9 H7 V6 H0Z" fill="#f7b03c"/><rect x="0" y="2" width="7" height="4" fill="#fbbf4f"/><rect x="0.6" y="2.4" width="5.8" height="0.6" fill="#fff3d6" opacity="0.8"/></svg>
<div class="t" style="left:523px;top:380.51px;font-size:6.05px;line-height:6.96px;color:#2a2a2a;transform:scaleX(0.91);transform-origin:left;">Kosten</div>
<svg style="position:absolute;left:524px;top:392.0px;" width="7" height="7" viewBox="0 0 7 7"><rect x="0.3" y="0.3" width="1.9" height="1.9" fill="#5a50c8"/><rect x="0.3" y="2.5999999999999996" width="1.9" height="1.9" fill="#5a50c8"/><rect x="0.3" y="4.8999999999999995" width="1.9" height="1.9" fill="#5a50c8"/><rect x="2.5999999999999996" y="0.3" width="1.9" height="1.9" fill="#5a50c8"/><rect x="2.5999999999999996" y="2.5999999999999996" width="1.9" height="1.9" fill="#5a50c8"/><rect x="2.5999999999999996" y="4.8999999999999995" width="1.9" height="1.9" fill="#5a50c8"/><rect x="4.8999999999999995" y="0.3" width="1.9" height="1.9" fill="#5a50c8"/><rect x="4.8999999999999995" y="2.5999999999999996" width="1.9" height="1.9" fill="#5a50c8"/><rect x="4.8999999999999995" y="4.8999999999999995" width="1.9" height="1.9" fill="#5a50c8"/></svg>
<div class="t" style="left:535px;top:392.01px;font-size:6.05px;line-height:6.96px;color:#2a2a2a;transform:scaleX(0.91);transform-origin:left;">Buchungen</div>
<svg style="position:absolute;left:498.5px;top:402.8px;" width="8" height="8" viewBox="0 0 8 8"><path d="M1.7000000000000002 2.85 L4 5.15 L6.3 2.85" fill="none" stroke="#333" stroke-width="0.75"/></svg>
<svg style="position:absolute;left:512px;top:403.8px;" width="7" height="6" viewBox="0 0 7 6"><path d="M0 0.5 h2.6 l0.8 0.9 H7 V6 H0Z" fill="#f7b03c"/><rect x="0" y="2" width="7" height="4" fill="#fbbf4f"/><rect x="0.6" y="2.4" width="5.8" height="0.6" fill="#fff3d6" opacity="0.8"/></svg>
<div class="t" style="left:523px;top:403.31px;font-size:6.05px;line-height:6.96px;color:#2a2a2a;transform:scaleX(0.91);transform-origin:left;">Zuordnungen</div>
<svg style="position:absolute;left:511px;top:414.4px;" width="8" height="8" viewBox="0 0 8 8"><path d="M1.7000000000000002 2.85 L4 5.15 L6.3 2.85" fill="none" stroke="#333" stroke-width="0.75"/></svg>
<svg style="position:absolute;left:524px;top:414.9px;" width="8" height="7" viewBox="0 0 8 7"><path d="M1 1 h2.6 l0.8 0.9 H8 V6 H1Z" fill="#f7b03c"/><rect x="0" y="3" width="6" height="3.5" fill="#8a5ad0"/></svg>
<div class="t" style="left:535px;top:414.91px;font-size:6.05px;line-height:6.96px;color:#2a2a2a;transform:scaleX(0.91);transform-origin:left;">Ist zugeordnet zu</div>
<svg style="position:absolute;left:537px;top:426.9px;" width="8" height="6" viewBox="0 0 8 6"><rect x="0" y="0" width="8" height="6" fill="#c77ad8"/><rect x="0" y="0" width="8" height="2" fill="#d99be6"/></svg>
<div class="t" style="left:548px;top:426.41px;font-size:6.05px;line-height:6.96px;color:#2a2a2a;transform:scaleX(0.91);transform-origin:left;">Räumen</div>
<svg style="position:absolute;left:537px;top:437.9px;" width="7" height="7" viewBox="0 0 7 7"><rect x="0" y="0" width="5" height="6" fill="#b06ad8"/><rect x="1.6" y="1" width="5" height="6" fill="#9b59c8"/></svg>
<div class="t" style="left:548px;top:437.91px;font-size:6.05px;line-height:6.96px;color:#2a2a2a;transform:scaleX(0.91);transform-origin:left;">Ressourcengruppen</div>
<div style="left:614px;top:210.8px;width:57px;height:21.3px;background:#c3d7ef;border-radius:3px 0 0 3px;"></div>
<svg style="position:absolute;left:619px;top:215.5px;" width="10" height="13" viewBox="0 0 10 13"><path d="M1 0.5 H6.5 L9 3 V12.5 H1Z" fill="#d6ecfa"/><rect x="1" y="7" width="5" height="5.5" fill="#f5a020"/></svg>
<div style="left:631.2px;top:216.3px;width:37.2px;height:11.6px;background:#cfdcec;border:0.7px solid #8a8a8a;"></div>
<div class="t" style="left:632.3px;top:217.26px;font-size:9.24px;line-height:10.63px;color:#333;transform:scaleX(0.91);transform-origin:left;letter-spacing:-0.55px">Ressource</div>
<div style="left:670.2px;top:205.6px;width:270.8px;height:45.2px;background:#f3f3f3;border:0.7px solid #dcdcdc;"></div>
<div style="left:675.6px;top:211px;width:13.6px;height:34.4px;background:#fff;border:0.6px solid #e0e0e0;border-radius:2px;"></div>
<svg style="position:absolute;left:678px;top:226px;" width="10" height="6" viewBox="0 0 10 6"><ellipse cx="5" cy="3.3" rx="4.3" ry="2.2" fill="#d8d8d8" stroke="#555" stroke-width="0.5"/><circle cx="6.5" cy="3.2" r="1.2" fill="#333"/><rect x="1.5" y="1.2" width="3" height="1" fill="#666"/></svg>
<div class="t" style="left:697px;top:218.01px;font-size:6.05px;line-height:6.96px;color:#333;transform:scaleX(0.91);transform-origin:left;">Name</div>
<div style="left:714px;top:216px;width:50px;height:10.5px;background:#f7f7f7;border:0.6px solid #e8e8e8;border-radius:1.5px;"></div>
<div class="t" style="left:716px;top:218.01px;font-size:6.05px;line-height:6.96px;color:#222;transform:scaleX(0.91);transform-origin:left;">Beamer1</div>
<div class="t" style="left:766.8px;top:218.01px;font-size:6.05px;line-height:6.96px;color:#333;transform:scaleX(0.91);transform-origin:left;">Inventarnummer</div>
<div style="left:810.6px;top:216px;width:124.4px;height:10.5px;background:#f7f7f7;border:0.6px solid #e8e8e8;border-radius:1.5px;"></div>
<div class="t" style="left:813px;top:218.01px;font-size:6.05px;line-height:6.96px;color:#222;transform:scaleX(0.91);transform-origin:left;">1</div>
<div class="t" style="left:697px;top:231.51px;font-size:6.05px;line-height:6.96px;color:#333;transform:scaleX(0.91);transform-origin:left;">Typ</div>
<div style="left:714px;top:229.8px;width:31.5px;height:10.5px;background:#f7f7f7;border:0.6px solid #e8e8e8;border-radius:1.5px;"></div>
<div class="t" style="left:716px;top:231.51px;font-size:6.05px;line-height:6.96px;color:#222;transform:scaleX(0.91);transform-origin:left;">Bea...</div>
<svg style="position:absolute;left:733.5px;top:231.2px;" width="8" height="8" viewBox="0 0 8 8"><path d="M2.5 3.25 L4 4.75 L5.5 3.25" fill="none" stroke="#888" stroke-width="0.5"/></svg>
<div style="left:745.5px;top:229.8px;width:17px;height:10.5px;background:#f7f7f7;border:0.6px solid #e8e8e8;border-radius:1.5px;"></div>
<svg style="position:absolute;left:744.5px;top:231px;" width="8" height="8" viewBox="0 0 8 8"><rect x="1" y="0.5" width="5" height="7" fill="#c8e8f8"/><path d="M2 7 L6.5 2" stroke="#f0a020" stroke-width="1.1"/></svg>
<svg style="position:absolute;left:753.5px;top:231px;" width="8" height="8" viewBox="0 0 8 8"><rect x="1" y="0.5" width="5" height="7" fill="#c8e8f8"/><circle cx="3.8" cy="3.8" r="1.8" fill="#fff" stroke="#555" stroke-width="0.6"/><path d="M5 5 L7 7" stroke="#e09020" stroke-width="0.9"/></svg>
<div style="left:614.6px;top:263.5px;width:133px;height:253.49999999999994px;border:0.7px solid #c9d8ea;border-bottom:none;border-radius:2px 2px 0 0;"></div>
<div style="left:619px;top:256.5px;width:50px;height:12px;background:#f3f3f3;"></div>
<svg style="position:absolute;left:621px;top:257px;" width="11" height="11" viewBox="0 0 11 11"><path d="M3 0.5 H8 L10.5 3 V10.5 H3Z" fill="#d6ecfa"/><circle cx="4" cy="5" r="2.4" fill="#f0d020"/><path d="M1 5 Q4 2 6.5 5" stroke="#222" stroke-width="0.6" fill="none"/></svg>
<div class="t" style="left:636px;top:258.99px;font-size:9.02px;line-height:10.37px;color:#333;transform:scaleX(0.91);transform-origin:left;letter-spacing:-0.45px">Überblick</div>
<div style="left:626.6px;top:277.6px;width:34.4px;height:11px;background:#f3f3f3;border:0.6px solid #d8d8d8;border-bottom:none;border-radius:2px 2px 0 0;"></div>
<div class="t" style="left:443.79999999999995px;width:400px;text-align:center;top:279.71px;font-size:6.05px;line-height:6.96px;color:#333;transform:scaleX(0.91);transform-origin:center;">Ressource</div>
<div style="left:661px;top:279px;width:36px;height:9.5px;background:#ececec;border:0.6px solid #d8d8d8;border-bottom:none;border-radius:2px 2px 0 0;"></div>
<div class="t" style="left:479px;width:400px;text-align:center;top:280.51px;font-size:6.05px;line-height:6.96px;color:#333;transform:scaleX(0.91);transform-origin:center;">Datensatz</div>
<div style="left:621.3px;top:288px;width:118.2px;height:78.6px;border:0.6px solid #d8d8d8;"></div>
<div class="t" style="left:627px;top:297.21px;font-size:6.05px;line-height:6.96px;color:#333;transform:scaleX(0.91);transform-origin:left;">Name</div>
<div style="left:682.5px;top:295.6px;width:50.8px;height:10.5px;background:#f7f7f7;border:0.6px solid #e6e6e6;border-radius:1.5px;"></div>
<div class="t" style="left:684.5px;top:297.31px;font-size:6.05px;line-height:6.96px;color:#222;transform:scaleX(0.91);transform-origin:left;">Beamer1</div>
<div class="t" style="left:627px;top:310.71px;font-size:6.05px;line-height:6.96px;color:#333;transform:scaleX(0.91);transform-origin:left;">Inventarnummer</div>
<div style="left:682.5px;top:309px;width:50.8px;height:10.5px;background:#f7f7f7;border:0.6px solid #e6e6e6;border-radius:1.5px;"></div>
<div class="t" style="left:684.5px;top:310.81px;font-size:6.05px;line-height:6.96px;color:#222;transform:scaleX(0.91);transform-origin:left;">1</div>
<div class="t" style="left:627px;top:324.11px;font-size:6.05px;line-height:6.96px;color:#333;transform:scaleX(0.91);transform-origin:left;">Typ</div>
<div style="left:682.5px;top:322.4px;width:50.8px;height:10.5px;background:#f7f7f7;border:0.6px solid #e6e6e6;border-radius:1.5px;"></div>
<div class="t" style="left:684.5px;top:324.21px;font-size:6.05px;line-height:6.96px;color:#222;transform:scaleX(0.91);transform-origin:left;">Bea...</div>
<svg style="position:absolute;left:701.5px;top:323.8px;" width="8" height="8" viewBox="0 0 8 8"><path d="M2.5 3.25 L4 4.75 L5.5 3.25" fill="none" stroke="#888" stroke-width="0.5"/></svg>
<svg style="position:absolute;left:713.5px;top:323.5px;" width="8" height="8" viewBox="0 0 8 8"><rect x="1" y="0.5" width="5" height="7" fill="#c8e8f8"/><path d="M2 7 L6.5 2" stroke="#f0a020" stroke-width="1.1"/></svg>
<svg style="position:absolute;left:724.5px;top:323.5px;" width="8" height="8" viewBox="0 0 8 8"><rect x="1" y="0.5" width="5" height="7" fill="#c8e8f8"/><circle cx="3.8" cy="3.8" r="1.8" fill="#fff" stroke="#555" stroke-width="0.6"/><path d="M5 5 L7 7" stroke="#e09020" stroke-width="0.9"/></svg>
<div style="left:621.3px;top:372.7px;width:118.2px;height:67.3px;border:0.6px solid #d8d8d8;border-radius:2px;"></div>
<div style="left:625px;top:369px;width:34px;height:7px;background:#f3f3f3;"></div>
<div class="t" style="left:627px;top:369.33px;font-size:5.83px;line-height:6.70px;color:#333;transform:scaleX(0.91);transform-origin:left;">Lebenszylus</div>
<div class="t" style="left:627px;top:385.21px;font-size:6.05px;line-height:6.96px;color:#333;transform:scaleX(0.91);transform-origin:left;">Anschaffungsdatum</div>
<div style="left:682.5px;top:383.5px;width:50.8px;height:10.5px;background:#f7f7f7;border:0.6px solid #e6e6e6;border-radius:1.5px;"></div>
<div class="t" style="left:684.5px;top:385.31px;font-size:6.05px;line-height:6.96px;color:#222;transform:scaleX(0.91);transform-origin:left;">04.07.2024 00:</div>
<div style="left:724px;top:384.5px;width:8px;height:8.5px;background:#f7f7f7;"></div>
<svg style="position:absolute;left:724.5px;top:385px;" width="8" height="8" viewBox="0 0 8 8"><path d="M2.4 3.2 L4 4.8 L5.6 3.2" fill="none" stroke="#444" stroke-width="0.6"/></svg>
<div class="t" style="left:627px;top:398.51px;font-size:6.05px;line-height:6.96px;color:#333;transform:scaleX(0.91);transform-origin:left;">Entsorgungsdatum</div>
<div style="left:682.5px;top:397px;width:50.8px;height:10.5px;background:#f7f7f7;border:0.6px solid #e6e6e6;border-radius:1.5px;"></div>
<svg style="position:absolute;left:724.5px;top:398.3px;" width="8" height="8" viewBox="0 0 8 8"><path d="M2.4 3.2 L4 4.8 L5.6 3.2" fill="none" stroke="#444" stroke-width="0.6"/></svg>
<div class="t" style="left:627px;top:412.01px;font-size:6.05px;line-height:6.96px;color:#333;transform:scaleX(0.91);transform-origin:left;">Ablauf Garantie</div>
<div style="left:682.5px;top:410.4px;width:50.8px;height:10.5px;background:#f7f7f7;border:0.6px solid #e6e6e6;border-radius:1.5px;"></div>
<svg style="position:absolute;left:724.5px;top:411.8px;" width="8" height="8" viewBox="0 0 8 8"><path d="M2.4 3.2 L4 4.8 L5.6 3.2" fill="none" stroke="#444" stroke-width="0.6"/></svg>
<div class="t" style="left:627px;top:425.31px;font-size:6.05px;line-height:6.96px;color:#333;transform:scaleX(0.91);transform-origin:left;">Inaktiv</div>
<div style="left:682.8px;top:424.6px;width:8px;height:8px;background:#fff;border:0.6px solid #cfcfcf;border-radius:1.5px;"></div>
<div style="left:621.3px;top:446.2px;width:118.2px;height:27px;border:0.6px solid #d8d8d8;border-radius:2px;"></div>
<div style="left:625px;top:442.5px;width:34px;height:7px;background:#f3f3f3;"></div>
<div class="t" style="left:627px;top:443.01px;font-size:6.05px;line-height:6.96px;color:#333;transform:scaleX(0.91);transform-origin:left;">Beschreibung</div>
<div style="left:627px;top:455.5px;width:107px;height:11.8px;background:#f7f7f7;border:0.6px solid #e6e6e6;border-radius:1.5px;"></div>
<div class="t" style="left:629px;top:458.01px;font-size:6.05px;line-height:6.96px;color:#222;transform:scaleX(0.91);transform-origin:left;">Beschreibung zur Ressource</div>
<div style="left:627px;top:477px;width:28.5px;height:10.5px;background:#f3f3f3;border:0.6px solid #d8d8d8;border-bottom:none;border-radius:2px 2px 0 0;"></div>
<div class="t" style="left:441.20000000000005px;width:400px;text-align:center;top:478.81px;font-size:6.05px;line-height:6.96px;color:#333;transform:scaleX(0.91);transform-origin:center;">Zustand</div>
<div style="left:655.5px;top:477px;width:54.5px;height:10.5px;background:#ececec;border:0.6px solid #d8d8d8;border-bottom:none;border-radius:2px 2px 0 0;"></div>
<div class="t" style="left:482.70000000000005px;width:400px;text-align:center;top:478.81px;font-size:6.05px;line-height:6.96px;color:#333;transform:scaleX(0.91);transform-origin:center;">Nutzungshinweise</div>
<svg style="position:absolute;left:716.5px;top:478.3px;" width="8" height="8" viewBox="0 0 8 8"><path d="M4.8 2.4 L3.2 4 L4.8 5.6" fill="none" stroke="#bbb" stroke-width="0.6"/></svg>
<svg style="position:absolute;left:728.5px;top:478.3px;" width="8" height="8" viewBox="0 0 8 8"><path d="M3.2 2.4 L4.8 4 L3.2 5.6" fill="none" stroke="#555" stroke-width="0.6"/></svg>
<div style="left:621.3px;top:487.4px;width:118.2px;height:30px;border:0.6px solid #d8d8d8;border-bottom:none;"></div>
<div class="t" style="left:627px;top:495.31px;font-size:6.05px;line-height:6.96px;color:#333;transform:scaleX(0.91);transform-origin:left;">Hat Einschränkungen</div>
<svg style="position:absolute;left:682.5px;top:494.5px;" width="9" height="9" viewBox="0 0 9 9"><rect x="0.2" y="0.2" width="8.4" height="8.4" rx="1.3" fill="#0f6cbd"/><path d="M2 4.4 L3.6 6 L6.8 2.6" stroke="#fff" stroke-width="0.8" fill="none"/></svg>
<div style="left:627px;top:506px;width:107px;height:11.5px;background:#f7f7f7;border:0.6px solid #e6e6e6;border-radius:1.5px;"></div>
<div class="t" style="left:629px;top:508.51px;font-size:6.05px;line-height:6.96px;color:#222;transform:scaleX(0.91);transform-origin:left;">Hinweise zur Einschränkungen</div>
<div style="left:756px;top:272.8px;width:185px;height:244.19999999999993px;border:0.7px solid #c9d8ea;border-bottom:none;"></div>
<div style="left:761px;top:256.4px;width:50.5px;height:16.8px;background:#c3d7ef;border-radius:3px 3px 0 0;"></div>
<svg style="position:absolute;left:765.5px;top:260px;" width="9" height="9" viewBox="0 0 9 9"><rect x="0" y="0" width="9" height="9" rx="1" fill="#3a4a5c"/><circle cx="4.5" cy="4.5" r="3.4" fill="#f5a020"/><path d="M4.5 4.5 V1.1 A3.4 3.4 0 0 1 7.9 4.5Z" fill="#6ab0e8"/></svg>
<div class="t" style="left:779px;top:261.91px;font-size:6.05px;line-height:6.96px;color:#333;transform:scaleX(0.91);transform-origin:left;">Dashboard</div>
<div style="left:771px;top:287.7px;width:154.3px;height:228px;background:#fff;border-radius:4px;"></div>
<div class="t" style="left:774px;top:292.25px;font-size:6.49px;line-height:7.46px;color:#222;transform:scaleX(0.91);transform-origin:left;font-weight:700;letter-spacing:-0.05px">Anzahl der Buchungen</div>
<svg style="position:absolute;left:900.5px;top:291.5px;" width="8" height="9" viewBox="0 0 8 9"><path d="M1 4 V8 H7 V4" stroke="#333" stroke-width="0.7" fill="none"/><path d="M4 6 V1 M2.5 2.5 L4 1 L5.5 2.5" stroke="#333" stroke-width="0.7" fill="none"/></svg>
<svg style="position:absolute;left:913.5px;top:291.5px;" width="9" height="9" viewBox="0 0 9 9"><path d="M1 3 V1 H3 M6 1 H8 V3 M8 6 V8 H6 M3 8 H1 V6" stroke="#333" stroke-width="0.7" fill="none"/></svg>
<div style="left:779.2px;top:312.5px;width:137.8px;height:129.2px;background:#5f8a91;"></div>
<div style="left:779.2px;top:441.7px;width:137.8px;height:66.3px;background:#b84c51;"></div>
<div class="t" style="left:782.6px;top:314.79px;font-size:6.60px;line-height:7.59px;color:#fff;transform:scaleX(0.91);transform-origin:left;font-weight:700;text-shadow:0 0 1px #333;">Angefragt: 2</div>
<div class="t" style="left:782.6px;top:444.39px;font-size:6.60px;line-height:7.59px;color:#fff;transform:scaleX(0.91);transform-origin:left;font-weight:700;text-shadow:0 0 1px #333;">Bestätigt: 1</div>
<div style="left:947.2px;top:211px;width:0.9px;height:281px;background:#8a8a8a;"></div>
</body></html>
